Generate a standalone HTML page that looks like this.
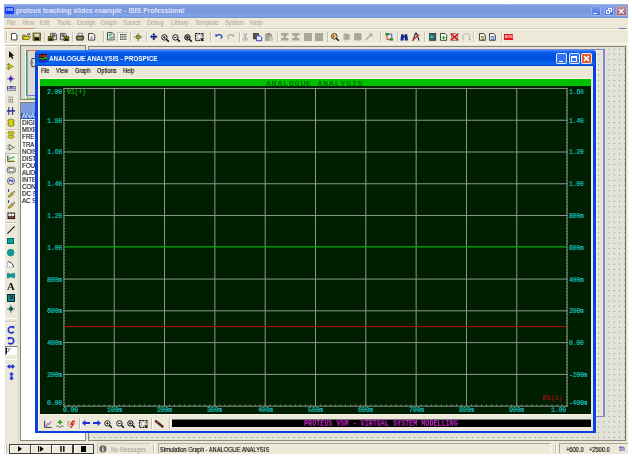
<!DOCTYPE html>
<html><head><meta charset="utf-8"><style>
html,body{margin:0;padding:0;}
body{width:632px;height:460px;overflow:hidden;background:#fff;position:relative;font-family:"Liberation Sans",sans-serif;}
div{position:absolute;}
</style></head><body>
<div style="left:4.00px;top:4.00px;width:624.00px;height:449.50px;background:#ECE9D8"></div>
<div style="left:4.00px;top:4.00px;width:624.00px;height:14.00px;background:linear-gradient(#A9BDEB 0%,#7F9BE1 12%,#7A96DF 55%,#80A5E6 85%,#7090D8 100%)"></div>
<div style="left:4.90px;top:6.80px;width:9.00px;height:7.20px;background:#1a3df0;border-radius:1px"></div>
<div style="left:5.70px;top:8.20px;font-family:'Liberation Sans', sans-serif;font-size:4.4px;line-height:4.4px;white-space:nowrap;color:#D8E0FF;font-weight:bold;transform:scale(0.8660,1.0000);transform-origin:0 0;will-change:transform;">ISIS</div>
<div style="left:15.80px;top:7.36px;font-family:'Liberation Sans', sans-serif;font-size:7.8px;line-height:7.8px;white-space:nowrap;color:#E4EBFF;font-weight:bold;transform:scale(0.8815,1.0000);transform-origin:0 0;will-change:transform;">proteus teaching slides example - ISIS Professional</div>
<div style="left:590.60px;top:5.60px;width:10.60px;height:10.60px;background:linear-gradient(#7898EA,#4A70DC);border:1px solid rgba(200,212,250,0.55);box-sizing:border-box;border-radius:2px"></div>
<div style="left:593.25px;top:12.60px;width:3.82px;height:1.59px;background:#F0F4FF"></div>
<div style="left:603.60px;top:5.60px;width:10.60px;height:10.60px;background:linear-gradient(#7898EA,#4A70DC);border:1px solid rgba(200,212,250,0.55);box-sizing:border-box;border-radius:2px"></div>
<div style="left:607.84px;top:8.14px;width:3.82px;height:3.60px;border:0.9px solid #F0F4FF;border-top-width:1.3px;box-sizing:border-box"></div>
<div style="left:606.36px;top:10.05px;width:3.82px;height:3.60px;border:0.9px solid #F0F4FF;border-top-width:1.3px;box-sizing:border-box;background:#5E80E2"></div>
<div style="left:616.00px;top:5.60px;width:10.60px;height:10.60px;background:linear-gradient(#C08890,#A86470);border:1px solid rgba(200,212,250,0.55);box-sizing:border-box;border-radius:2px"></div>
<svg style="position:absolute;left:616.00px;top:5.60px;overflow:visible" width="10.6" height="10.6" viewBox="0 0 10.6 10.6"><path d="M2.968 2.968L7.632 7.632M7.632 2.968L2.968 7.632" stroke="#fff" stroke-width="1.3"/></svg>
<div style="left:7.00px;top:20.15px;font-family:'Liberation Sans', sans-serif;font-size:6.6px;line-height:6.6px;white-space:nowrap;color:#A8A497;transform:scale(0.7805,1.0000);transform-origin:0 0;will-change:transform;">File</div>
<div style="left:21.80px;top:20.15px;font-family:'Liberation Sans', sans-serif;font-size:6.6px;line-height:6.6px;white-space:nowrap;color:#A8A497;transform:scale(0.8459,1.0000);transform-origin:0 0;will-change:transform;">View</div>
<div style="left:40.40px;top:20.15px;font-family:'Liberation Sans', sans-serif;font-size:6.6px;line-height:6.6px;white-space:nowrap;color:#A8A497;transform:scale(0.8265,1.0000);transform-origin:0 0;will-change:transform;">Edit</div>
<div style="left:57.00px;top:20.15px;font-family:'Liberation Sans', sans-serif;font-size:6.6px;line-height:6.6px;white-space:nowrap;color:#A8A497;transform:scale(0.9086,1.0000);transform-origin:0 0;will-change:transform;">Tools</div>
<div style="left:76.60px;top:20.15px;font-family:'Liberation Sans', sans-serif;font-size:6.6px;line-height:6.6px;white-space:nowrap;color:#A8A497;transform:scale(0.8956,1.0000);transform-origin:0 0;will-change:transform;">Design</div>
<div style="left:100.50px;top:20.15px;font-family:'Liberation Sans', sans-serif;font-size:6.6px;line-height:6.6px;white-space:nowrap;color:#A8A497;transform:scale(0.8722,1.0000);transform-origin:0 0;will-change:transform;">Graph</div>
<div style="left:123.00px;top:20.15px;font-family:'Liberation Sans', sans-serif;font-size:6.6px;line-height:6.6px;white-space:nowrap;color:#A8A497;transform:scale(0.8607,1.0000);transform-origin:0 0;will-change:transform;">Source</div>
<div style="left:147.00px;top:20.15px;font-family:'Liberation Sans', sans-serif;font-size:6.6px;line-height:6.6px;white-space:nowrap;color:#A8A497;transform:scale(0.8535,1.0000);transform-origin:0 0;will-change:transform;">Debug</div>
<div style="left:170.60px;top:20.15px;font-family:'Liberation Sans', sans-serif;font-size:6.6px;line-height:6.6px;white-space:nowrap;color:#A8A497;transform:scale(0.8625,1.0000);transform-origin:0 0;will-change:transform;">Library</div>
<div style="left:195.00px;top:20.15px;font-family:'Liberation Sans', sans-serif;font-size:6.6px;line-height:6.6px;white-space:nowrap;color:#A8A497;transform:scale(0.8775,1.0000);transform-origin:0 0;will-change:transform;">Template</div>
<div style="left:225.00px;top:20.15px;font-family:'Liberation Sans', sans-serif;font-size:6.6px;line-height:6.6px;white-space:nowrap;color:#A8A497;transform:scale(0.8498,1.0000);transform-origin:0 0;will-change:transform;">System</div>
<div style="left:250.00px;top:20.15px;font-family:'Liberation Sans', sans-serif;font-size:6.6px;line-height:6.6px;white-space:nowrap;color:#A8A497;transform:scale(0.9282,1.0000);transform-origin:0 0;will-change:transform;">Help</div>
<div style="left:4.00px;top:28.20px;width:624.00px;height:1.00px;background:#D8D4C4"></div>
<div style="left:4.00px;top:28.00px;width:31.00px;height:1.20px;background:#E0906A"></div>
<div style="left:4.00px;top:29.20px;width:624.00px;height:1.00px;background:#F8F6EE"></div>
<div style="left:619.00px;top:28.00px;width:6.50px;height:1.10px;background:#5A78B8"></div>
<div style="left:5.60px;top:31.00px;width:1.00px;height:11.40px;background:#C8C5B5"></div>
<div style="left:6.60px;top:31.00px;width:0.70px;height:11.40px;background:#F6F5EE"></div>
<div style="left:44.20px;top:32.00px;width:1.00px;height:10.00px;background:#C8C5B5"></div>
<div style="left:45.20px;top:32.00px;width:0.80px;height:10.00px;background:#F8F7F0"></div>
<div style="left:72.00px;top:32.00px;width:1.00px;height:10.00px;background:#C8C5B5"></div>
<div style="left:73.00px;top:32.00px;width:0.80px;height:10.00px;background:#F8F7F0"></div>
<div style="left:102.60px;top:31.00px;width:1.00px;height:11.40px;background:#C8C5B5"></div>
<div style="left:103.60px;top:31.00px;width:0.70px;height:11.40px;background:#F6F5EE"></div>
<div style="left:130.20px;top:32.00px;width:1.00px;height:10.00px;background:#C8C5B5"></div>
<div style="left:131.20px;top:32.00px;width:0.80px;height:10.00px;background:#F8F7F0"></div>
<div style="left:146.20px;top:32.00px;width:1.00px;height:10.00px;background:#C8C5B5"></div>
<div style="left:147.20px;top:32.00px;width:0.80px;height:10.00px;background:#F8F7F0"></div>
<div style="left:209.80px;top:31.00px;width:1.00px;height:11.40px;background:#C8C5B5"></div>
<div style="left:210.80px;top:31.00px;width:0.70px;height:11.40px;background:#F6F5EE"></div>
<div style="left:238.60px;top:32.00px;width:1.00px;height:10.00px;background:#C8C5B5"></div>
<div style="left:239.60px;top:32.00px;width:0.80px;height:10.00px;background:#F8F7F0"></div>
<div style="left:277.20px;top:32.00px;width:1.00px;height:10.00px;background:#C8C5B5"></div>
<div style="left:278.20px;top:32.00px;width:0.80px;height:10.00px;background:#F8F7F0"></div>
<div style="left:327.00px;top:32.00px;width:1.00px;height:10.00px;background:#C8C5B5"></div>
<div style="left:328.00px;top:32.00px;width:0.80px;height:10.00px;background:#F8F7F0"></div>
<div style="left:380.20px;top:31.00px;width:1.00px;height:11.40px;background:#C8C5B5"></div>
<div style="left:381.20px;top:31.00px;width:0.70px;height:11.40px;background:#F6F5EE"></div>
<div style="left:396.80px;top:32.00px;width:1.00px;height:10.00px;background:#C8C5B5"></div>
<div style="left:397.80px;top:32.00px;width:0.80px;height:10.00px;background:#F8F7F0"></div>
<div style="left:424.20px;top:32.00px;width:1.00px;height:10.00px;background:#C8C5B5"></div>
<div style="left:425.20px;top:32.00px;width:0.80px;height:10.00px;background:#F8F7F0"></div>
<div style="left:473.40px;top:32.00px;width:1.00px;height:10.00px;background:#C8C5B5"></div>
<div style="left:474.40px;top:32.00px;width:0.80px;height:10.00px;background:#F8F7F0"></div>
<div style="left:500.60px;top:32.00px;width:1.00px;height:10.00px;background:#C8C5B5"></div>
<div style="left:501.60px;top:32.00px;width:0.80px;height:10.00px;background:#F8F7F0"></div>
<div style="left:4.00px;top:42.60px;width:624.00px;height:0.90px;background:#FAF9F2"></div>
<svg style="position:absolute;left:11.00px;top:33.00px;overflow:visible" width="6.4" height="7.4" viewBox="0 0 6.4 7.4"><path d="M0.5 0.5H4.48L5.9 1.92V6.9H0.5Z" fill="#fff" stroke="#333" stroke-width="0.9"/></svg>
<svg style="position:absolute;left:21.60px;top:33.40px;overflow:visible" width="9" height="6.8" viewBox="0 0 9 6.8"><path d="M0.5 2H3L4 3H7V6.3H0.5Z" fill="#C8B800" stroke="#555" stroke-width="0.7"/><path d="M1 6.3L2.5 3.6H8.6L7 6.3Z" fill="#EEE030" stroke="#6a6000" stroke-width="0.6"/><path d="M5 1.6Q6.5 0 8 1.4" stroke="#222" stroke-width="0.9" fill="none"/><path d="M7.6 0.6L8.6 1.8L7.2 2.2Z" fill="#222"/></svg>
<svg style="position:absolute;left:33.20px;top:33.00px;overflow:visible" width="7.6" height="7.4" viewBox="0 0 7.6 7.4"><rect x="0" y="0" width="7.6" height="7.4" fill="#8A8410"/><rect x="1.4" y="0.6" width="4.8" height="3" fill="#D8D8E8"/><rect x="1.6" y="4.6" width="4.4" height="2.6" fill="#101010"/><rect x="0" y="0" width="7.6" height="7.4" fill="none" stroke="#3a3a00" stroke-width="0.6"/></svg>
<svg style="position:absolute;left:48.40px;top:32.90px;overflow:visible" width="9" height="7.6" viewBox="0 0 9 7.6"><path d="M2.6 0.4H7.4L8.6 1.6V6.8H2.6Z" fill="#D8D8D8" stroke="#333" stroke-width="0.8"/><path d="M4.2 1.4H7.4V3.6H4.2Z" fill="#555"/><rect x="0.2" y="3.8" width="4.8" height="3.6" fill="#A8A000" stroke="#111" stroke-width="0.7"/><rect x="1.2" y="5.4" width="2.8" height="1.8" fill="#111"/></svg>
<svg style="position:absolute;left:59.50px;top:32.90px;overflow:visible" width="9" height="7.6" viewBox="0 0 9 7.6"><path d="M0.4 0.4H5.2L6.4 1.6V6.8H0.4Z" fill="#D8D8D8" stroke="#333" stroke-width="0.8"/><path d="M1.4 1.4H4.6V3.6H1.4Z" fill="#555"/><rect x="4" y="3.8" width="4.8" height="3.6" fill="#A8A000" stroke="#111" stroke-width="0.7"/><rect x="5" y="5.4" width="2.8" height="1.8" fill="#111"/></svg>
<svg style="position:absolute;left:75.90px;top:33.00px;overflow:visible" width="8" height="7.6" viewBox="0 0 8 7.6"><path d="M2 0.3H6.4V3H2Z" fill="#eee" stroke="#444" stroke-width="0.6"/><path d="M0.4 3H7.6Q8 5 7.2 7.2H0.8Q0 5 0.4 3Z" fill="#606060" stroke="#222" stroke-width="0.6"/><rect x="2.2" y="4.6" width="3.6" height="1.1" fill="#D8C800"/></svg>
<svg style="position:absolute;left:87.80px;top:33.00px;overflow:visible" width="7.2" height="7.6" viewBox="0 0 7.2 7.6"><path d="M0.5 0.5H5.04L6.7 2.16V7.1H0.5Z" fill="#F4F4F4" stroke="#333" stroke-width="0.9"/><rect x="2.5" y="3.5" width="2" height="2.5" fill="#999"/></svg>
<svg style="position:absolute;left:107.30px;top:32.40px;overflow:visible" width="7.6" height="8.4" viewBox="0 0 7.6 8.4"><path d="M0.5 0.5H5.32L7.1 2.28V7.9H0.5Z" fill="#F0F0F0" stroke="#444" stroke-width="0.9"/><path d="M2 4A2 2 0 0 1 5.5 3" stroke="#20A040" stroke-width="1.1" fill="none"/><path d="M5.6 4.6A2 2 0 0 1 2.2 5.6" stroke="#20A040" stroke-width="1.1" fill="none"/><circle cx="3.8" cy="4.3" r="0.6" fill="#3090D0"/></svg>
<div style="left:117.00px;top:31.50px;width:11.20px;height:10.80px;background:#F6F5EE;border-top:1px solid #C8C6B8;border-left:1px solid #C8C6B8;box-sizing:border-box"></div>
<svg style="position:absolute;left:119.70px;top:34.30px;overflow:visible" width="6.4" height="6" viewBox="0 0 6.4 6"><rect x="0.00" y="0.00" width="1.2" height="1.2" fill="#222"/><rect x="0.00" y="2.30" width="1.2" height="1.2" fill="#222"/><rect x="0.00" y="4.60" width="1.2" height="1.2" fill="#222"/><rect x="1.75" y="0.00" width="1.2" height="1.2" fill="#222"/><rect x="1.75" y="2.30" width="1.2" height="1.2" fill="#222"/><rect x="1.75" y="4.60" width="1.2" height="1.2" fill="#222"/><rect x="3.50" y="0.00" width="1.2" height="1.2" fill="#222"/><rect x="3.50" y="2.30" width="1.2" height="1.2" fill="#222"/><rect x="3.50" y="4.60" width="1.2" height="1.2" fill="#222"/><rect x="5.25" y="0.00" width="1.2" height="1.2" fill="#222"/><rect x="5.25" y="2.30" width="1.2" height="1.2" fill="#222"/><rect x="5.25" y="4.60" width="1.2" height="1.2" fill="#222"/></svg>
<svg style="position:absolute;left:134.30px;top:32.80px;overflow:visible" width="8.4" height="8" viewBox="0 0 8.4 8"><path d="M4.2 0V8M0 4H8.4" stroke="#555" stroke-width="0.8"/><rect x="2.4" y="2.2" width="3.6" height="3.6" fill="#A09A20" stroke="#505000" stroke-width="0.4"/></svg>
<svg style="position:absolute;left:150.00px;top:33.40px;overflow:visible" width="7.6" height="7.4" viewBox="0 0 7.6 7.4"><path d="M3.8 0L5.4 2H4.5V3H5.6V2.1L7.6 3.7L5.6 5.3V4.4H4.5V5.4H5.4L3.8 7.4L2.2 5.4H3.1V4.4H2V5.3L0 3.7L2 2.1V3H3.1V2H2.2Z" fill="#10208A"/></svg>
<svg style="position:absolute;left:161.00px;top:33.50px;overflow:visible" width="8" height="7.8" viewBox="0 0 8 7.8"><circle cx="3.4" cy="3.4" r="2.7" fill="#fff" stroke="#111" stroke-width="1"/><path d="M5.3 5.3L7.8 7.6" stroke="#111" stroke-width="1.5"/><path d="M2 3.4H4.8M3.4 2V4.8" stroke="#111" stroke-width="0.8"/></svg>
<svg style="position:absolute;left:172.30px;top:33.50px;overflow:visible" width="8" height="7.8" viewBox="0 0 8 7.8"><circle cx="3.4" cy="3.4" r="2.7" fill="#fff" stroke="#111" stroke-width="1"/><path d="M5.3 5.3L7.8 7.6" stroke="#111" stroke-width="1.5"/><path d="M2 3.4H4.8" stroke="#111" stroke-width="0.9"/></svg>
<svg style="position:absolute;left:183.50px;top:33.50px;overflow:visible" width="8" height="7.8" viewBox="0 0 8 7.8"><circle cx="3.4" cy="3.4" r="2.7" fill="#999" stroke="#111" stroke-width="1"/><path d="M5.3 5.3L7.8 7.6" stroke="#111" stroke-width="1.5"/><path d="M2 3.4H4.8M3.4 2V4.8" stroke="#111" stroke-width="0.8"/></svg>
<svg style="position:absolute;left:195.00px;top:33.00px;overflow:visible" width="8.6" height="8" viewBox="0 0 8.6 8"><rect x="0.6" y="0.6" width="7.4" height="6.8" fill="#fff" stroke="#181818" stroke-width="1.3" stroke-dasharray="2 0.8"/><circle cx="4.3" cy="3.8" r="2.2" fill="#fff" stroke="#555" stroke-width="0.5"/><path d="M5.8 5.6L8.2 7.8" stroke="#111" stroke-width="1.3"/></svg>
<svg style="position:absolute;left:215.40px;top:34.00px;overflow:visible" width="7.8" height="4.8" viewBox="0 0 7.8 4.8"><path d="M1.6 1.6Q4 -0.4 6.6 1.6Q7.6 3.6 5.6 4.4" stroke="#2040D0" stroke-width="1.3" fill="none"/><path d="M0 0.4L2.8 0.8L1 3.4Z" fill="#2040D0"/></svg>
<svg style="position:absolute;left:227.00px;top:34.00px;overflow:visible" width="7.2" height="4.8" viewBox="0 0 7.2 4.8"><path d="M6 1.6Q3.6 -0.4 1 1.6Q0 3.6 2 4.4" stroke="#A8A698" stroke-width="1.1" fill="none"/><path d="M7.2 0.4L4.6 0.8L6.4 3.4Z" fill="#A8A698"/></svg>
<svg style="position:absolute;left:243.00px;top:33.00px;overflow:visible" width="4.6" height="7.7" viewBox="0 0 4.6 7.7"><path d="M0.8 0L3 5M3.8 0L1.6 5" stroke="#999" stroke-width="0.8"/><circle cx="1.1" cy="6.3" r="1.1" fill="none" stroke="#999" stroke-width="0.7"/><circle cx="3.5" cy="6.3" r="1.1" fill="none" stroke="#999" stroke-width="0.7"/></svg>
<svg style="position:absolute;left:253.00px;top:33.00px;overflow:visible" width="9" height="8" viewBox="0 0 9 8"><rect x="0.3" y="0.3" width="5" height="5.6" fill="#555" stroke="#222" stroke-width="0.6"/><path d="M3.3 2.8H7L8.6 4.4V7.7H3.3Z" fill="#E8E8F8" stroke="#2030C0" stroke-width="0.9"/></svg>
<svg style="position:absolute;left:265.20px;top:33.00px;overflow:visible" width="8.4" height="8" viewBox="0 0 8.4 8"><rect x="0.5" y="1" width="6" height="6.5" fill="#A8A698" stroke="#9a988a" stroke-width="0.6"/><rect x="2" y="0" width="3" height="1.6" fill="#8A887A"/><rect x="4" y="4" width="4.2" height="3.8" fill="#C8C6BA"/></svg>
<svg style="position:absolute;left:281.20px;top:33.10px;overflow:visible" width="7.4" height="7.6" viewBox="0 0 7.4 7.6"><path d="M0 0H7.4V2.6H5V5H7.4V7.6H0V5H2.4V2.6H0Z" fill="#A9A799"/></svg>
<svg style="position:absolute;left:292.40px;top:33.10px;overflow:visible" width="7.4" height="7.6" viewBox="0 0 7.4 7.6"><path d="M0 0H7.4V2.6H5V5H7.4V7.6H0V5H2.4V2.6H0Z" fill="#A9A799"/></svg>
<div style="left:304.00px;top:33.10px;width:7.60px;height:7.60px;background:#A9A799"></div>
<div style="left:315.40px;top:33.10px;width:7.40px;height:7.60px;background:#A9A799"></div>
<svg style="position:absolute;left:331.00px;top:33.00px;overflow:visible" width="8" height="8" viewBox="0 0 8 8"><circle cx="3.3" cy="3.3" r="2.8" fill="#E8D070" stroke="#333" stroke-width="0.9"/><path d="M1.8 2.2L4.5 3.3L1.8 4.5Z" fill="#D03020"/><path d="M5.2 5.2L7.8 7.8" stroke="#111" stroke-width="1.5"/></svg>
<svg style="position:absolute;left:343.30px;top:33.00px;overflow:visible" width="7.4" height="7.6" viewBox="0 0 7.4 7.6"><rect x="1.4" y="1.2" width="4.6" height="5.2" fill="#A9A799"/><path d="M0 2H7.4M0 4H7.4M0 6H7.4M2 0V7.6M4 0V7.6" stroke="#A9A799" stroke-width="0.8"/></svg>
<svg style="position:absolute;left:353.90px;top:33.10px;overflow:visible" width="7.6" height="7.6" viewBox="0 0 7.6 7.6"><rect x="0" y="0" width="7.6" height="7.6" rx="1.5" fill="#A9A799"/></svg>
<svg style="position:absolute;left:365.00px;top:33.10px;overflow:visible" width="7.6" height="7.6" viewBox="0 0 7.6 7.6"><path d="M0.5 7.2L5.5 2.2" stroke="#A9A799" stroke-width="1.3"/><path d="M3.5 0.5L7.4 0.5L7.4 4.4Z" fill="#A9A799"/></svg>
<svg style="position:absolute;left:385.00px;top:33.20px;overflow:visible" width="8.2" height="7.6" viewBox="0 0 8.2 7.6"><rect x="0.5" y="0" width="3.2" height="2.4" fill="#109020"/><rect x="4.6" y="5.2" width="3.4" height="2.4" fill="#109020"/><path d="M2 2.4V6.6H4.6" stroke="#E03030" stroke-width="1" fill="none"/><path d="M3.7 1.2H6.8V5.2" stroke="#3050D0" stroke-width="1" fill="none"/></svg>
<svg style="position:absolute;left:400.40px;top:33.00px;overflow:visible" width="8.4" height="7.8" viewBox="0 0 8.4 7.8"><path d="M0.4 7.6L1.2 1.2H3.6V7.6Z M4.8 7.6V1.2H7.2L8 7.6Z" fill="#14248A"/><rect x="3" y="2.6" width="2.4" height="2" fill="#14248A"/></svg>
<svg style="position:absolute;left:412.20px;top:33.00px;overflow:visible" width="7.8" height="7.8" viewBox="0 0 7.8 7.8"><path d="M1 7.6L3.5 0.4H4.5L7 7.6" stroke="#222" stroke-width="1.2" fill="none"/><path d="M0.4 7.6L7.4 1.4" stroke="#D02020" stroke-width="1.1"/></svg>
<svg style="position:absolute;left:428.80px;top:33.00px;overflow:visible" width="7.2" height="7.8" viewBox="0 0 7.2 7.8"><rect x="0.4" y="0.4" width="6.4" height="7" fill="#2A6A5A" stroke="#333" stroke-width="0.7"/><path d="M1.6 2.2L5.4 3.9L1.6 5.6Z" fill="#40D0E0"/></svg>
<svg style="position:absolute;left:440.40px;top:33.00px;overflow:visible" width="7.2" height="7.8" viewBox="0 0 7.2 7.8"><path d="M0.5 0.5H5.04L6.7 2.16V7.3H0.5Z" fill="#fff" stroke="#333" stroke-width="0.9"/><path d="M3.6 2.6V6.6M1.6 4.6H5.6" stroke="#20C020" stroke-width="1.3"/></svg>
<svg style="position:absolute;left:450.40px;top:33.00px;overflow:visible" width="9" height="7.8" viewBox="0 0 9 7.8"><path d="M1.7 0.5H5.82L7.3 1.9799999999999998V7.3H1.7Z" fill="#D8D8D8" stroke="#777" stroke-width="0.9"/><path d="M0.6 0.6L8.4 7.4M8.4 0.6L0.6 7.4" stroke="#E01818" stroke-width="1.4"/></svg>
<svg style="position:absolute;left:461.60px;top:33.00px;overflow:visible" width="8.6" height="7.8" viewBox="0 0 8.6 7.8"><path d="M1 7.4V3Q1 0.8 3.4 0.8H5.4Q7.6 0.8 7.6 3V7.4" stroke="#B5B3A6" stroke-width="1" fill="none"/><path d="M6 5.6L7.6 7.6L8.6 5.6" stroke="#B5B3A6" stroke-width="0.8" fill="none"/></svg>
<svg style="position:absolute;left:478.50px;top:33.00px;overflow:visible" width="6.8" height="7.8" viewBox="0 0 6.8 7.8"><path d="M0.5 0.5H4.76L6.3 2.04V7.3H0.5Z" fill="#F4F4F4" stroke="#333" stroke-width="0.9"/><text x="1.4" y="6.6" font-size="6" font-family="Liberation Sans" font-weight="bold" fill="#707010">S</text></svg>
<svg style="position:absolute;left:489.00px;top:33.00px;overflow:visible" width="6.8" height="7.8" viewBox="0 0 6.8 7.8"><path d="M0.5 0.5H4.76L6.3 2.04V7.3H0.5Z" fill="#F4F4F4" stroke="#333" stroke-width="0.9"/><text x="1.4" y="6.6" font-size="6" font-family="Liberation Sans" font-weight="bold" fill="#2060D0">S</text></svg>
<div style="left:504.00px;top:33.50px;width:9.40px;height:6.80px;background:#E81818"></div>
<div style="left:505.00px;top:34.93px;font-family:'Liberation Sans', sans-serif;font-size:4.2px;line-height:4.2px;white-space:nowrap;color:#FFD8D8;font-weight:bold;transform:scale(0.7552,1.0000);transform-origin:0 0;will-change:transform;">BOM</div>
<div style="left:4.20px;top:44.00px;width:0.80px;height:399.00px;background:#FFFFFF"></div>
<div style="left:5.20px;top:45.40px;width:12.00px;height:0.90px;background:#C5C2B2"></div>
<div style="left:5.20px;top:46.30px;width:12.00px;height:0.70px;background:#fff"></div>
<svg style="position:absolute;left:7.80px;top:51.20px;overflow:visible" width="7" height="8" viewBox="0 0 7 8"><path d="M1 0V7L2.8 5.4L4.2 8L5.4 7.4L4.1 4.8H6.4Z" fill="#111"/></svg>
<svg style="position:absolute;left:6.40px;top:62.60px;overflow:visible" width="8" height="7.2" viewBox="0 0 8 7.2"><path d="M0 2H2.5M0 5.2H2.5M5.5 3.6H7.8" stroke="#888" stroke-width="0.8"/><path d="M2.2 0.3L6.4 3.6L2.2 6.9Z" fill="#D8C800" stroke="#606000" stroke-width="0.7"/></svg>
<svg style="position:absolute;left:7.00px;top:74.60px;overflow:visible" width="7.6" height="7.6" viewBox="0 0 7.6 7.6"><path d="M3.8 0V7.6M0 3.8H7.6" stroke="#303080" stroke-width="0.7"/><circle cx="3.8" cy="3.8" r="2" fill="#6020C0"/></svg>
<div style="left:6.80px;top:85.80px;width:9.60px;height:5.60px;background:#D8D8E0;border:0.7px solid #8888A0;box-sizing:border-box"></div>
<div style="left:7.40px;top:86.73px;font-family:'Liberation Sans', sans-serif;font-size:3.6px;line-height:3.6px;white-space:nowrap;color:#2A2A90;font-weight:bold;transform:scale(1.1718,1.0000);transform-origin:0 0;will-change:transform;">LBL</div>
<svg style="position:absolute;left:8.20px;top:96.20px;overflow:visible" width="6" height="7" viewBox="0 0 6 7"><path d="M0.4 1.2Q1 0 1.6 1.2T2.8 1.2T4 1.2T5.4 1.2" stroke="#555" stroke-width="0.7" fill="none"/><path d="M0.4 3.4H5.4M0.4 5H5.4" stroke="#666" stroke-width="0.9" stroke-dasharray="1.2 0.5"/><path d="M0.4 6.2H5.4" stroke="#888" stroke-width="0.7"/></svg>
<svg style="position:absolute;left:6.80px;top:107.00px;overflow:visible" width="8" height="8" viewBox="0 0 8 8"><path d="M0 3.9H8" stroke="#10188A" stroke-width="1.4"/><path d="M1.8 0V3.6M5.6 0V3.6M1.8 4.4V8M5.6 4.4V8" stroke="#10188A" stroke-width="0.9"/></svg>
<svg style="position:absolute;left:6.60px;top:118.60px;overflow:visible" width="8" height="7.4" viewBox="0 0 8 7.4"><rect x="1.4" y="0.3" width="5.2" height="7" rx="1" fill="#D8CC10" stroke="#707000" stroke-width="0.7"/><path d="M0 2H1.4M0 5.2H1.4M6.6 2H8M6.6 5.2H8" stroke="#707070" stroke-width="0.7"/></svg>
<div style="left:5.20px;top:129.30px;width:12.00px;height:0.80px;background:#C5C2B2"></div>
<div style="left:5.20px;top:130.10px;width:12.00px;height:0.60px;background:#fff"></div>
<svg style="position:absolute;left:7.00px;top:131.40px;overflow:visible" width="8" height="7.4" viewBox="0 0 8 7.4"><rect x="1" y="0.3" width="6" height="2.8" rx="1.3" fill="#D8CC10" stroke="#606000" stroke-width="0.6"/><rect x="1" y="4.2" width="6" height="2.8" rx="1.3" fill="#D8CC10" stroke="#606000" stroke-width="0.6"/></svg>
<svg style="position:absolute;left:6.60px;top:143.60px;overflow:visible" width="8" height="6.8" viewBox="0 0 8 6.8"><path d="M0 2H1.6M0 4.6H1.6" stroke="#40B040" stroke-width="0.8"/><path d="M2.2 0.4L6.6 3.3L2.2 6.2Z" fill="#F0F0E0" stroke="#333" stroke-width="0.7"/><path d="M6.6 3.3H8" stroke="#40B040" stroke-width="0.8"/></svg>
<div style="left:5.20px;top:153.20px;width:12.00px;height:10.20px;background:#F6F5EE;border-top:1px solid #B8B6A8;border-left:1px solid #B8B6A8;box-sizing:border-box"></div>
<svg style="position:absolute;left:7.00px;top:154.60px;overflow:visible" width="8" height="7.2" viewBox="0 0 8 7.2"><rect x="0.3" y="0.3" width="7.4" height="6.8" fill="#F4F2E4"/><path d="M0.8 0.4V6.6H7.6" stroke="#222" stroke-width="0.9" fill="none"/><path d="M1.4 5L3 2.6L4.4 4L6 1.6L7.4 2.8" stroke="#10A010" stroke-width="0.9" fill="none"/><rect x="1.2" y="5.4" width="6.2" height="0.9" fill="#C8B820"/></svg>
<svg style="position:absolute;left:6.60px;top:167.00px;overflow:visible" width="8.6" height="6.2" viewBox="0 0 8.6 6.2"><rect x="0.3" y="0.3" width="8" height="5.6" rx="1.8" fill="#E8E6DA" stroke="#555" stroke-width="0.8"/><rect x="2" y="1.6" width="4.6" height="3" fill="#fff" stroke="#555" stroke-width="0.6"/></svg>
<svg style="position:absolute;left:7.00px;top:177.20px;overflow:visible" width="8" height="8" viewBox="0 0 8 8"><circle cx="4" cy="4" r="3.5" fill="#F0F0F0" stroke="#444" stroke-width="0.8"/><path d="M2 5Q2.6 1.6 4 3.6Q5.4 6 6 2.6" stroke="#2040D0" stroke-width="1.1" fill="none"/></svg>
<svg style="position:absolute;left:6.60px;top:188.60px;overflow:visible" width="8.4" height="8.4" viewBox="0 0 8.4 8.4"><path d="M1 7.6L5 3.4L6.6 5L2.6 8.2Z" fill="#D8C810" stroke="#333" stroke-width="0.6"/><path d="M5.6 3.8Q6.6 1.6 8.2 3" stroke="#333" stroke-width="0.8" fill="none"/><path d="M1.6 0V3" stroke="#2A3AC0" stroke-width="1"/></svg>
<svg style="position:absolute;left:6.60px;top:200.20px;overflow:visible" width="8.4" height="8.4" viewBox="0 0 8.4 8.4"><path d="M1 7.6L5 3.4L6.6 5L2.6 8.2Z" fill="#D8C810" stroke="#333" stroke-width="0.6"/><path d="M5.6 3.8Q6.6 1.6 8.2 3" stroke="#333" stroke-width="0.8" fill="none"/><path d="M1.6 0V3" stroke="#2A3AC0" stroke-width="1"/></svg>
<svg style="position:absolute;left:6.60px;top:212.40px;overflow:visible" width="8.6" height="7.6" viewBox="0 0 8.6 7.6"><rect x="0.5" y="0.5" width="7.6" height="6.6" fill="#222"/><circle cx="2.8" cy="2.8" r="1.6" fill="#eee"/><circle cx="5.8" cy="2.8" r="1.6" fill="#eee"/><rect x="2" y="4.8" width="4.6" height="1.2" fill="#D03030"/></svg>
<div style="left:5.20px;top:222.20px;width:12.00px;height:0.80px;background:#C5C2B2"></div>
<div style="left:5.20px;top:223.00px;width:12.00px;height:0.60px;background:#fff"></div>
<svg style="position:absolute;left:6.60px;top:225.70px;overflow:visible" width="8" height="8" viewBox="0 0 8 8"><path d="M0.4 7.6L7.6 0.4" stroke="#111" stroke-width="1.1"/></svg>
<div style="left:7.20px;top:238.00px;width:7.20px;height:6.40px;background:#109C9C;border:0.6px solid #066;box-sizing:border-box"></div>
<svg style="position:absolute;left:7.00px;top:248.60px;overflow:visible" width="7.4" height="7.4" viewBox="0 0 7.4 7.4"><circle cx="3.7" cy="3.7" r="3.4" fill="#109C9C" stroke="#066" stroke-width="0.5"/></svg>
<svg style="position:absolute;left:7.00px;top:260.80px;overflow:visible" width="7.4" height="6.8" viewBox="0 0 7.4 6.8"><path d="M0.5 0.5V6H6.6Q6 2 1.2 0.5Z" fill="#fff" stroke="#5050D0" stroke-width="0.6" stroke-dasharray="1 0.7"/><path d="M1.2 0.5Q6 2 6.6 6" stroke="#222" stroke-width="0.8" fill="none"/></svg>
<svg style="position:absolute;left:6.80px;top:271.60px;overflow:visible" width="8" height="7.2" viewBox="0 0 8 7.2"><path d="M0.6 1Q3.8 3.2 7.4 1Q8.4 3.6 7.4 6.2Q3.8 4 0.6 6.2Q-0.4 3.6 0.6 1Z" fill="#109C9C" stroke="#066" stroke-width="0.5"/></svg>
<div style="left:6.60px;top:281.57px;font-family:'Liberation Serif', serif;font-size:10px;line-height:10px;white-space:nowrap;color:#111;font-weight:bold;transform:scale(1.0801,1.0000);transform-origin:0 0;will-change:transform;">A</div>
<div style="left:7.00px;top:294.00px;width:7.60px;height:7.60px;background:#188C8C;border:0.6px solid #033;box-sizing:border-box"></div>
<div style="left:8.50px;top:294.32px;font-family:'Liberation Sans', sans-serif;font-size:6.8px;line-height:6.8px;white-space:nowrap;color:#0A2020;font-weight:bold;transform:scale(1.0142,1.0000);transform-origin:0 0;will-change:transform;">S</div>
<svg style="position:absolute;left:7.00px;top:305.40px;overflow:visible" width="7.8" height="7.8" viewBox="0 0 7.8 7.8"><path d="M3.9 0V7.8M0 3.9H7.8" stroke="#333" stroke-width="0.7"/><circle cx="3.9" cy="3.9" r="2.1" fill="#106060"/></svg>
<div style="left:5.20px;top:317.60px;width:12.00px;height:0.80px;background:#C5C2B2"></div>
<div style="left:5.20px;top:318.40px;width:12.00px;height:0.60px;background:#fff"></div>
<div style="left:5.20px;top:320.80px;width:12.00px;height:0.80px;background:#C5C2B2"></div>
<div style="left:5.20px;top:321.60px;width:12.00px;height:0.60px;background:#fff"></div>
<svg style="position:absolute;left:7.00px;top:325.60px;overflow:visible" width="8" height="8" viewBox="0 0 8 8"><path d="M6.6 1.6A3.1 3.1 0 1 0 6.8 5.8" stroke="#1A30E0" stroke-width="1.6" fill="none"/><path d="M4.4 0L7.6 0.2L6.8 3Z" fill="#1A30E0"/></svg>
<svg style="position:absolute;left:7.00px;top:337.20px;overflow:visible" width="8" height="8" viewBox="0 0 8 8"><path d="M1.4 1.6A3.1 3.1 0 1 1 1.2 5.8" stroke="#1A30E0" stroke-width="1.6" fill="none"/><path d="M3.6 0L0.4 0.2L1.2 3Z" fill="#1A30E0"/></svg>
<div style="left:5.20px;top:346.40px;width:13.00px;height:8.80px;background:#fff;border-top:1px solid #777;border-left:1px solid #777;border-right:0.5px solid #ddd;box-sizing:border-box"></div>
<div style="left:6.40px;top:347.71px;font-family:'Liberation Sans', sans-serif;font-size:5.6px;line-height:5.6px;white-space:nowrap;color:#333;will-change:transform;">0°</div>
<div style="left:6.40px;top:348.00px;width:0.70px;height:6.00px;background:#111"></div>
<div style="left:5.20px;top:358.60px;width:12.00px;height:0.80px;background:#C5C2B2"></div>
<div style="left:5.20px;top:359.40px;width:12.00px;height:0.60px;background:#fff"></div>
<svg style="position:absolute;left:6.80px;top:363.80px;overflow:visible" width="8" height="5" viewBox="0 0 8 5"><path d="M0 2.5L2.6 0V1.6H5V0L8 2.5L5 5V3.4H2.6V5Z" fill="#1A30E0"/></svg>
<svg style="position:absolute;left:8.60px;top:372.40px;overflow:visible" width="5" height="8.6" viewBox="0 0 5 8.6"><path d="M2.5 0L5 2.6H3.4V5.8H5L2.5 8.6L0 5.8H1.6V2.6H0Z" fill="#1A30E0"/></svg>
<div style="left:18.20px;top:44.00px;width:0.90px;height:399.00px;background:#D6D3C4"></div>
<div style="left:20.00px;top:45.40px;width:66.00px;height:54.80px;background:#DCDBCE;border-top:1.6px solid #858375;border-left:1.4px solid #858375;border-bottom:1.6px solid #858375;border-right:1.2px solid #858375;box-sizing:border-box"></div>
<div style="left:24.60px;top:48.80px;width:0.80px;height:49.00px;background:#FFFDE8"></div>
<div style="left:26.00px;top:49.60px;width:60.00px;height:0.90px;background:#E07060"></div>
<div style="left:25.90px;top:49.60px;width:0.90px;height:46.60px;background:#7070D8"></div>
<div style="left:25.90px;top:95.40px;width:60.00px;height:0.90px;background:#7070D8"></div>
<div style="left:27.00px;top:50.50px;width:0.90px;height:48.00px;background:#60D060"></div>
<div style="left:27.00px;top:97.80px;width:60.00px;height:0.90px;background:#60D060"></div>
<svg style="position:absolute;left:30.20px;top:57.60px;overflow:visible" width="6" height="9.4" viewBox="0 0 6 9.4"><path d="M6 0.5H1.8V8.6H6" stroke="#222" stroke-width="0.8" fill="none"/><circle cx="1.5" cy="4.6" r="0.9" fill="#E8E6DA" stroke="#222" stroke-width="0.6"/></svg>
<div style="left:20.00px;top:102.20px;width:66.00px;height:339.00px;background:#fff;border-top:1.2px solid #858375;border-left:1.4px solid #858375;border-right:1px solid #8A887A;border-bottom:1.2px solid #8A887A;box-sizing:border-box"></div>
<div style="left:21.40px;top:103.20px;width:64.00px;height:9.40px;background:#7E9BE0"></div>
<div style="left:21.40px;top:112.60px;width:64.00px;height:6.30px;background:#2E5EC8"></div>
<div style="left:21.80px;top:112.26px;font-family:'Liberation Sans', sans-serif;font-size:7.2px;line-height:7.2px;white-space:nowrap;color:#fff;transform:scale(0.8600,1.0000);transform-origin:0 0;will-change:transform;-webkit-text-stroke:0.12px currentColor;">ANALOGUE</div>
<div style="left:21.80px;top:119.33px;font-family:'Liberation Sans', sans-serif;font-size:7.2px;line-height:7.2px;white-space:nowrap;color:#000;transform:scale(0.8600,1.0000);transform-origin:0 0;will-change:transform;-webkit-text-stroke:0.12px currentColor;">DIGITAL</div>
<div style="left:21.80px;top:126.40px;font-family:'Liberation Sans', sans-serif;font-size:7.2px;line-height:7.2px;white-space:nowrap;color:#000;transform:scale(0.8600,1.0000);transform-origin:0 0;will-change:transform;-webkit-text-stroke:0.12px currentColor;">MIXED</div>
<div style="left:21.80px;top:133.47px;font-family:'Liberation Sans', sans-serif;font-size:7.2px;line-height:7.2px;white-space:nowrap;color:#000;transform:scale(0.8600,1.0000);transform-origin:0 0;will-change:transform;-webkit-text-stroke:0.12px currentColor;">FREQUENCY</div>
<div style="left:21.80px;top:140.54px;font-family:'Liberation Sans', sans-serif;font-size:7.2px;line-height:7.2px;white-space:nowrap;color:#000;transform:scale(0.8600,1.0000);transform-origin:0 0;will-change:transform;-webkit-text-stroke:0.12px currentColor;">TRANSFER</div>
<div style="left:21.80px;top:147.61px;font-family:'Liberation Sans', sans-serif;font-size:7.2px;line-height:7.2px;white-space:nowrap;color:#000;transform:scale(0.8600,1.0000);transform-origin:0 0;will-change:transform;-webkit-text-stroke:0.12px currentColor;">NOISE</div>
<div style="left:21.80px;top:154.68px;font-family:'Liberation Sans', sans-serif;font-size:7.2px;line-height:7.2px;white-space:nowrap;color:#000;transform:scale(0.8600,1.0000);transform-origin:0 0;will-change:transform;-webkit-text-stroke:0.12px currentColor;">DISTORTION</div>
<div style="left:21.80px;top:161.75px;font-family:'Liberation Sans', sans-serif;font-size:7.2px;line-height:7.2px;white-space:nowrap;color:#000;transform:scale(0.8600,1.0000);transform-origin:0 0;will-change:transform;-webkit-text-stroke:0.12px currentColor;">FOURIER</div>
<div style="left:21.80px;top:168.82px;font-family:'Liberation Sans', sans-serif;font-size:7.2px;line-height:7.2px;white-space:nowrap;color:#000;transform:scale(0.8600,1.0000);transform-origin:0 0;will-change:transform;-webkit-text-stroke:0.12px currentColor;">AUDIO</div>
<div style="left:21.80px;top:175.89px;font-family:'Liberation Sans', sans-serif;font-size:7.2px;line-height:7.2px;white-space:nowrap;color:#000;transform:scale(0.8600,1.0000);transform-origin:0 0;will-change:transform;-webkit-text-stroke:0.12px currentColor;">INTERACTIVE</div>
<div style="left:21.80px;top:182.96px;font-family:'Liberation Sans', sans-serif;font-size:7.2px;line-height:7.2px;white-space:nowrap;color:#000;transform:scale(0.8600,1.0000);transform-origin:0 0;will-change:transform;-webkit-text-stroke:0.12px currentColor;">CONFORMANCE</div>
<div style="left:21.80px;top:190.03px;font-family:'Liberation Sans', sans-serif;font-size:7.2px;line-height:7.2px;white-space:nowrap;color:#000;transform:scale(0.8600,1.0000);transform-origin:0 0;will-change:transform;-webkit-text-stroke:0.12px currentColor;">DC SWEEP</div>
<div style="left:21.80px;top:197.10px;font-family:'Liberation Sans', sans-serif;font-size:7.2px;line-height:7.2px;white-space:nowrap;color:#000;transform:scale(0.8600,1.0000);transform-origin:0 0;will-change:transform;-webkit-text-stroke:0.12px currentColor;">AC SWEEP</div>
<div style="left:87.80px;top:45.60px;width:538.60px;height:395.40px;background:#E3E2D6;border-top:1.6px solid #84826F;border-left:1.2px solid #84826F;border-bottom:1.2px solid #8C8A7C;border-right:1.2px solid #707064;box-sizing:border-box"></div>
<div style="left:596.00px;top:50.00px;width:7.00px;height:366.00px;background:linear-gradient(90deg,#F4F2DE 0,#E8E7DA 30%,#E6E5D8 80%,#F0EEDA 100%)"></div>
<svg style="position:absolute;left:0;top:0" width="632" height="460" fill="#8E8D84"><rect x="598.00" y="48.55" width="1" height="1"/><rect x="603.25" y="48.55" width="1" height="1"/><rect x="608.50" y="48.55" width="1" height="1"/><rect x="613.75" y="48.55" width="1" height="1"/><rect x="619.00" y="48.55" width="1" height="1"/><rect x="624.25" y="48.55" width="1" height="1"/><rect x="598.00" y="53.80" width="1" height="1"/><rect x="603.25" y="53.80" width="1" height="1"/><rect x="608.50" y="53.80" width="1" height="1"/><rect x="613.75" y="53.80" width="1" height="1"/><rect x="619.00" y="53.80" width="1" height="1"/><rect x="624.25" y="53.80" width="1" height="1"/><rect x="598.00" y="59.05" width="1" height="1"/><rect x="603.25" y="59.05" width="1" height="1"/><rect x="608.50" y="59.05" width="1" height="1"/><rect x="613.75" y="59.05" width="1" height="1"/><rect x="619.00" y="59.05" width="1" height="1"/><rect x="624.25" y="59.05" width="1" height="1"/><rect x="598.00" y="64.30" width="1" height="1"/><rect x="603.25" y="64.30" width="1" height="1"/><rect x="608.50" y="64.30" width="1" height="1"/><rect x="613.75" y="64.30" width="1" height="1"/><rect x="619.00" y="64.30" width="1" height="1"/><rect x="624.25" y="64.30" width="1" height="1"/><rect x="598.00" y="69.55" width="1" height="1"/><rect x="603.25" y="69.55" width="1" height="1"/><rect x="608.50" y="69.55" width="1" height="1"/><rect x="613.75" y="69.55" width="1" height="1"/><rect x="619.00" y="69.55" width="1" height="1"/><rect x="624.25" y="69.55" width="1" height="1"/><rect x="598.00" y="74.80" width="1" height="1"/><rect x="603.25" y="74.80" width="1" height="1"/><rect x="608.50" y="74.80" width="1" height="1"/><rect x="613.75" y="74.80" width="1" height="1"/><rect x="619.00" y="74.80" width="1" height="1"/><rect x="624.25" y="74.80" width="1" height="1"/><rect x="598.00" y="80.05" width="1" height="1"/><rect x="603.25" y="80.05" width="1" height="1"/><rect x="608.50" y="80.05" width="1" height="1"/><rect x="613.75" y="80.05" width="1" height="1"/><rect x="619.00" y="80.05" width="1" height="1"/><rect x="624.25" y="80.05" width="1" height="1"/><rect x="598.00" y="85.30" width="1" height="1"/><rect x="603.25" y="85.30" width="1" height="1"/><rect x="608.50" y="85.30" width="1" height="1"/><rect x="613.75" y="85.30" width="1" height="1"/><rect x="619.00" y="85.30" width="1" height="1"/><rect x="624.25" y="85.30" width="1" height="1"/><rect x="598.00" y="90.55" width="1" height="1"/><rect x="603.25" y="90.55" width="1" height="1"/><rect x="608.50" y="90.55" width="1" height="1"/><rect x="613.75" y="90.55" width="1" height="1"/><rect x="619.00" y="90.55" width="1" height="1"/><rect x="624.25" y="90.55" width="1" height="1"/><rect x="598.00" y="95.80" width="1" height="1"/><rect x="603.25" y="95.80" width="1" height="1"/><rect x="608.50" y="95.80" width="1" height="1"/><rect x="613.75" y="95.80" width="1" height="1"/><rect x="619.00" y="95.80" width="1" height="1"/><rect x="624.25" y="95.80" width="1" height="1"/><rect x="598.00" y="101.05" width="1" height="1"/><rect x="603.25" y="101.05" width="1" height="1"/><rect x="608.50" y="101.05" width="1" height="1"/><rect x="613.75" y="101.05" width="1" height="1"/><rect x="619.00" y="101.05" width="1" height="1"/><rect x="624.25" y="101.05" width="1" height="1"/><rect x="598.00" y="106.30" width="1" height="1"/><rect x="603.25" y="106.30" width="1" height="1"/><rect x="608.50" y="106.30" width="1" height="1"/><rect x="613.75" y="106.30" width="1" height="1"/><rect x="619.00" y="106.30" width="1" height="1"/><rect x="624.25" y="106.30" width="1" height="1"/><rect x="598.00" y="111.55" width="1" height="1"/><rect x="603.25" y="111.55" width="1" height="1"/><rect x="608.50" y="111.55" width="1" height="1"/><rect x="613.75" y="111.55" width="1" height="1"/><rect x="619.00" y="111.55" width="1" height="1"/><rect x="624.25" y="111.55" width="1" height="1"/><rect x="598.00" y="116.80" width="1" height="1"/><rect x="603.25" y="116.80" width="1" height="1"/><rect x="608.50" y="116.80" width="1" height="1"/><rect x="613.75" y="116.80" width="1" height="1"/><rect x="619.00" y="116.80" width="1" height="1"/><rect x="624.25" y="116.80" width="1" height="1"/><rect x="598.00" y="122.05" width="1" height="1"/><rect x="603.25" y="122.05" width="1" height="1"/><rect x="608.50" y="122.05" width="1" height="1"/><rect x="613.75" y="122.05" width="1" height="1"/><rect x="619.00" y="122.05" width="1" height="1"/><rect x="624.25" y="122.05" width="1" height="1"/><rect x="598.00" y="127.30" width="1" height="1"/><rect x="603.25" y="127.30" width="1" height="1"/><rect x="608.50" y="127.30" width="1" height="1"/><rect x="613.75" y="127.30" width="1" height="1"/><rect x="619.00" y="127.30" width="1" height="1"/><rect x="624.25" y="127.30" width="1" height="1"/><rect x="598.00" y="132.55" width="1" height="1"/><rect x="603.25" y="132.55" width="1" height="1"/><rect x="608.50" y="132.55" width="1" height="1"/><rect x="613.75" y="132.55" width="1" height="1"/><rect x="619.00" y="132.55" width="1" height="1"/><rect x="624.25" y="132.55" width="1" height="1"/><rect x="598.00" y="137.80" width="1" height="1"/><rect x="603.25" y="137.80" width="1" height="1"/><rect x="608.50" y="137.80" width="1" height="1"/><rect x="613.75" y="137.80" width="1" height="1"/><rect x="619.00" y="137.80" width="1" height="1"/><rect x="624.25" y="137.80" width="1" height="1"/><rect x="598.00" y="143.05" width="1" height="1"/><rect x="603.25" y="143.05" width="1" height="1"/><rect x="608.50" y="143.05" width="1" height="1"/><rect x="613.75" y="143.05" width="1" height="1"/><rect x="619.00" y="143.05" width="1" height="1"/><rect x="624.25" y="143.05" width="1" height="1"/><rect x="598.00" y="148.30" width="1" height="1"/><rect x="603.25" y="148.30" width="1" height="1"/><rect x="608.50" y="148.30" width="1" height="1"/><rect x="613.75" y="148.30" width="1" height="1"/><rect x="619.00" y="148.30" width="1" height="1"/><rect x="624.25" y="148.30" width="1" height="1"/><rect x="598.00" y="153.55" width="1" height="1"/><rect x="603.25" y="153.55" width="1" height="1"/><rect x="608.50" y="153.55" width="1" height="1"/><rect x="613.75" y="153.55" width="1" height="1"/><rect x="619.00" y="153.55" width="1" height="1"/><rect x="624.25" y="153.55" width="1" height="1"/><rect x="598.00" y="158.80" width="1" height="1"/><rect x="603.25" y="158.80" width="1" height="1"/><rect x="608.50" y="158.80" width="1" height="1"/><rect x="613.75" y="158.80" width="1" height="1"/><rect x="619.00" y="158.80" width="1" height="1"/><rect x="624.25" y="158.80" width="1" height="1"/><rect x="598.00" y="164.05" width="1" height="1"/><rect x="603.25" y="164.05" width="1" height="1"/><rect x="608.50" y="164.05" width="1" height="1"/><rect x="613.75" y="164.05" width="1" height="1"/><rect x="619.00" y="164.05" width="1" height="1"/><rect x="624.25" y="164.05" width="1" height="1"/><rect x="598.00" y="169.30" width="1" height="1"/><rect x="603.25" y="169.30" width="1" height="1"/><rect x="608.50" y="169.30" width="1" height="1"/><rect x="613.75" y="169.30" width="1" height="1"/><rect x="619.00" y="169.30" width="1" height="1"/><rect x="624.25" y="169.30" width="1" height="1"/><rect x="598.00" y="174.55" width="1" height="1"/><rect x="603.25" y="174.55" width="1" height="1"/><rect x="608.50" y="174.55" width="1" height="1"/><rect x="613.75" y="174.55" width="1" height="1"/><rect x="619.00" y="174.55" width="1" height="1"/><rect x="624.25" y="174.55" width="1" height="1"/><rect x="598.00" y="179.80" width="1" height="1"/><rect x="603.25" y="179.80" width="1" height="1"/><rect x="608.50" y="179.80" width="1" height="1"/><rect x="613.75" y="179.80" width="1" height="1"/><rect x="619.00" y="179.80" width="1" height="1"/><rect x="624.25" y="179.80" width="1" height="1"/><rect x="598.00" y="185.05" width="1" height="1"/><rect x="603.25" y="185.05" width="1" height="1"/><rect x="608.50" y="185.05" width="1" height="1"/><rect x="613.75" y="185.05" width="1" height="1"/><rect x="619.00" y="185.05" width="1" height="1"/><rect x="624.25" y="185.05" width="1" height="1"/><rect x="598.00" y="190.30" width="1" height="1"/><rect x="603.25" y="190.30" width="1" height="1"/><rect x="608.50" y="190.30" width="1" height="1"/><rect x="613.75" y="190.30" width="1" height="1"/><rect x="619.00" y="190.30" width="1" height="1"/><rect x="624.25" y="190.30" width="1" height="1"/><rect x="598.00" y="195.55" width="1" height="1"/><rect x="603.25" y="195.55" width="1" height="1"/><rect x="608.50" y="195.55" width="1" height="1"/><rect x="613.75" y="195.55" width="1" height="1"/><rect x="619.00" y="195.55" width="1" height="1"/><rect x="624.25" y="195.55" width="1" height="1"/><rect x="598.00" y="200.80" width="1" height="1"/><rect x="603.25" y="200.80" width="1" height="1"/><rect x="608.50" y="200.80" width="1" height="1"/><rect x="613.75" y="200.80" width="1" height="1"/><rect x="619.00" y="200.80" width="1" height="1"/><rect x="624.25" y="200.80" width="1" height="1"/><rect x="598.00" y="206.05" width="1" height="1"/><rect x="603.25" y="206.05" width="1" height="1"/><rect x="608.50" y="206.05" width="1" height="1"/><rect x="613.75" y="206.05" width="1" height="1"/><rect x="619.00" y="206.05" width="1" height="1"/><rect x="624.25" y="206.05" width="1" height="1"/><rect x="598.00" y="211.30" width="1" height="1"/><rect x="603.25" y="211.30" width="1" height="1"/><rect x="608.50" y="211.30" width="1" height="1"/><rect x="613.75" y="211.30" width="1" height="1"/><rect x="619.00" y="211.30" width="1" height="1"/><rect x="624.25" y="211.30" width="1" height="1"/><rect x="598.00" y="216.55" width="1" height="1"/><rect x="603.25" y="216.55" width="1" height="1"/><rect x="608.50" y="216.55" width="1" height="1"/><rect x="613.75" y="216.55" width="1" height="1"/><rect x="619.00" y="216.55" width="1" height="1"/><rect x="624.25" y="216.55" width="1" height="1"/><rect x="598.00" y="221.80" width="1" height="1"/><rect x="603.25" y="221.80" width="1" height="1"/><rect x="608.50" y="221.80" width="1" height="1"/><rect x="613.75" y="221.80" width="1" height="1"/><rect x="619.00" y="221.80" width="1" height="1"/><rect x="624.25" y="221.80" width="1" height="1"/><rect x="598.00" y="227.05" width="1" height="1"/><rect x="603.25" y="227.05" width="1" height="1"/><rect x="608.50" y="227.05" width="1" height="1"/><rect x="613.75" y="227.05" width="1" height="1"/><rect x="619.00" y="227.05" width="1" height="1"/><rect x="624.25" y="227.05" width="1" height="1"/><rect x="598.00" y="232.30" width="1" height="1"/><rect x="603.25" y="232.30" width="1" height="1"/><rect x="608.50" y="232.30" width="1" height="1"/><rect x="613.75" y="232.30" width="1" height="1"/><rect x="619.00" y="232.30" width="1" height="1"/><rect x="624.25" y="232.30" width="1" height="1"/><rect x="598.00" y="237.55" width="1" height="1"/><rect x="603.25" y="237.55" width="1" height="1"/><rect x="608.50" y="237.55" width="1" height="1"/><rect x="613.75" y="237.55" width="1" height="1"/><rect x="619.00" y="237.55" width="1" height="1"/><rect x="624.25" y="237.55" width="1" height="1"/><rect x="598.00" y="242.80" width="1" height="1"/><rect x="603.25" y="242.80" width="1" height="1"/><rect x="608.50" y="242.80" width="1" height="1"/><rect x="613.75" y="242.80" width="1" height="1"/><rect x="619.00" y="242.80" width="1" height="1"/><rect x="624.25" y="242.80" width="1" height="1"/><rect x="598.00" y="248.05" width="1" height="1"/><rect x="603.25" y="248.05" width="1" height="1"/><rect x="608.50" y="248.05" width="1" height="1"/><rect x="613.75" y="248.05" width="1" height="1"/><rect x="619.00" y="248.05" width="1" height="1"/><rect x="624.25" y="248.05" width="1" height="1"/><rect x="598.00" y="253.30" width="1" height="1"/><rect x="603.25" y="253.30" width="1" height="1"/><rect x="608.50" y="253.30" width="1" height="1"/><rect x="613.75" y="253.30" width="1" height="1"/><rect x="619.00" y="253.30" width="1" height="1"/><rect x="624.25" y="253.30" width="1" height="1"/><rect x="598.00" y="258.55" width="1" height="1"/><rect x="603.25" y="258.55" width="1" height="1"/><rect x="608.50" y="258.55" width="1" height="1"/><rect x="613.75" y="258.55" width="1" height="1"/><rect x="619.00" y="258.55" width="1" height="1"/><rect x="624.25" y="258.55" width="1" height="1"/><rect x="598.00" y="263.80" width="1" height="1"/><rect x="603.25" y="263.80" width="1" height="1"/><rect x="608.50" y="263.80" width="1" height="1"/><rect x="613.75" y="263.80" width="1" height="1"/><rect x="619.00" y="263.80" width="1" height="1"/><rect x="624.25" y="263.80" width="1" height="1"/><rect x="598.00" y="269.05" width="1" height="1"/><rect x="603.25" y="269.05" width="1" height="1"/><rect x="608.50" y="269.05" width="1" height="1"/><rect x="613.75" y="269.05" width="1" height="1"/><rect x="619.00" y="269.05" width="1" height="1"/><rect x="624.25" y="269.05" width="1" height="1"/><rect x="598.00" y="274.30" width="1" height="1"/><rect x="603.25" y="274.30" width="1" height="1"/><rect x="608.50" y="274.30" width="1" height="1"/><rect x="613.75" y="274.30" width="1" height="1"/><rect x="619.00" y="274.30" width="1" height="1"/><rect x="624.25" y="274.30" width="1" height="1"/><rect x="598.00" y="279.55" width="1" height="1"/><rect x="603.25" y="279.55" width="1" height="1"/><rect x="608.50" y="279.55" width="1" height="1"/><rect x="613.75" y="279.55" width="1" height="1"/><rect x="619.00" y="279.55" width="1" height="1"/><rect x="624.25" y="279.55" width="1" height="1"/><rect x="598.00" y="284.80" width="1" height="1"/><rect x="603.25" y="284.80" width="1" height="1"/><rect x="608.50" y="284.80" width="1" height="1"/><rect x="613.75" y="284.80" width="1" height="1"/><rect x="619.00" y="284.80" width="1" height="1"/><rect x="624.25" y="284.80" width="1" height="1"/><rect x="598.00" y="290.05" width="1" height="1"/><rect x="603.25" y="290.05" width="1" height="1"/><rect x="608.50" y="290.05" width="1" height="1"/><rect x="613.75" y="290.05" width="1" height="1"/><rect x="619.00" y="290.05" width="1" height="1"/><rect x="624.25" y="290.05" width="1" height="1"/><rect x="598.00" y="295.30" width="1" height="1"/><rect x="603.25" y="295.30" width="1" height="1"/><rect x="608.50" y="295.30" width="1" height="1"/><rect x="613.75" y="295.30" width="1" height="1"/><rect x="619.00" y="295.30" width="1" height="1"/><rect x="624.25" y="295.30" width="1" height="1"/><rect x="598.00" y="300.55" width="1" height="1"/><rect x="603.25" y="300.55" width="1" height="1"/><rect x="608.50" y="300.55" width="1" height="1"/><rect x="613.75" y="300.55" width="1" height="1"/><rect x="619.00" y="300.55" width="1" height="1"/><rect x="624.25" y="300.55" width="1" height="1"/><rect x="598.00" y="305.80" width="1" height="1"/><rect x="603.25" y="305.80" width="1" height="1"/><rect x="608.50" y="305.80" width="1" height="1"/><rect x="613.75" y="305.80" width="1" height="1"/><rect x="619.00" y="305.80" width="1" height="1"/><rect x="624.25" y="305.80" width="1" height="1"/><rect x="598.00" y="311.05" width="1" height="1"/><rect x="603.25" y="311.05" width="1" height="1"/><rect x="608.50" y="311.05" width="1" height="1"/><rect x="613.75" y="311.05" width="1" height="1"/><rect x="619.00" y="311.05" width="1" height="1"/><rect x="624.25" y="311.05" width="1" height="1"/><rect x="598.00" y="316.30" width="1" height="1"/><rect x="603.25" y="316.30" width="1" height="1"/><rect x="608.50" y="316.30" width="1" height="1"/><rect x="613.75" y="316.30" width="1" height="1"/><rect x="619.00" y="316.30" width="1" height="1"/><rect x="624.25" y="316.30" width="1" height="1"/><rect x="598.00" y="321.55" width="1" height="1"/><rect x="603.25" y="321.55" width="1" height="1"/><rect x="608.50" y="321.55" width="1" height="1"/><rect x="613.75" y="321.55" width="1" height="1"/><rect x="619.00" y="321.55" width="1" height="1"/><rect x="624.25" y="321.55" width="1" height="1"/><rect x="598.00" y="326.80" width="1" height="1"/><rect x="603.25" y="326.80" width="1" height="1"/><rect x="608.50" y="326.80" width="1" height="1"/><rect x="613.75" y="326.80" width="1" height="1"/><rect x="619.00" y="326.80" width="1" height="1"/><rect x="624.25" y="326.80" width="1" height="1"/><rect x="598.00" y="332.05" width="1" height="1"/><rect x="603.25" y="332.05" width="1" height="1"/><rect x="608.50" y="332.05" width="1" height="1"/><rect x="613.75" y="332.05" width="1" height="1"/><rect x="619.00" y="332.05" width="1" height="1"/><rect x="624.25" y="332.05" width="1" height="1"/><rect x="598.00" y="337.30" width="1" height="1"/><rect x="603.25" y="337.30" width="1" height="1"/><rect x="608.50" y="337.30" width="1" height="1"/><rect x="613.75" y="337.30" width="1" height="1"/><rect x="619.00" y="337.30" width="1" height="1"/><rect x="624.25" y="337.30" width="1" height="1"/><rect x="598.00" y="342.55" width="1" height="1"/><rect x="603.25" y="342.55" width="1" height="1"/><rect x="608.50" y="342.55" width="1" height="1"/><rect x="613.75" y="342.55" width="1" height="1"/><rect x="619.00" y="342.55" width="1" height="1"/><rect x="624.25" y="342.55" width="1" height="1"/><rect x="598.00" y="347.80" width="1" height="1"/><rect x="603.25" y="347.80" width="1" height="1"/><rect x="608.50" y="347.80" width="1" height="1"/><rect x="613.75" y="347.80" width="1" height="1"/><rect x="619.00" y="347.80" width="1" height="1"/><rect x="624.25" y="347.80" width="1" height="1"/><rect x="598.00" y="353.05" width="1" height="1"/><rect x="603.25" y="353.05" width="1" height="1"/><rect x="608.50" y="353.05" width="1" height="1"/><rect x="613.75" y="353.05" width="1" height="1"/><rect x="619.00" y="353.05" width="1" height="1"/><rect x="624.25" y="353.05" width="1" height="1"/><rect x="598.00" y="358.30" width="1" height="1"/><rect x="603.25" y="358.30" width="1" height="1"/><rect x="608.50" y="358.30" width="1" height="1"/><rect x="613.75" y="358.30" width="1" height="1"/><rect x="619.00" y="358.30" width="1" height="1"/><rect x="624.25" y="358.30" width="1" height="1"/><rect x="598.00" y="363.55" width="1" height="1"/><rect x="603.25" y="363.55" width="1" height="1"/><rect x="608.50" y="363.55" width="1" height="1"/><rect x="613.75" y="363.55" width="1" height="1"/><rect x="619.00" y="363.55" width="1" height="1"/><rect x="624.25" y="363.55" width="1" height="1"/><rect x="598.00" y="368.80" width="1" height="1"/><rect x="603.25" y="368.80" width="1" height="1"/><rect x="608.50" y="368.80" width="1" height="1"/><rect x="613.75" y="368.80" width="1" height="1"/><rect x="619.00" y="368.80" width="1" height="1"/><rect x="624.25" y="368.80" width="1" height="1"/><rect x="598.00" y="374.05" width="1" height="1"/><rect x="603.25" y="374.05" width="1" height="1"/><rect x="608.50" y="374.05" width="1" height="1"/><rect x="613.75" y="374.05" width="1" height="1"/><rect x="619.00" y="374.05" width="1" height="1"/><rect x="624.25" y="374.05" width="1" height="1"/><rect x="598.00" y="379.30" width="1" height="1"/><rect x="603.25" y="379.30" width="1" height="1"/><rect x="608.50" y="379.30" width="1" height="1"/><rect x="613.75" y="379.30" width="1" height="1"/><rect x="619.00" y="379.30" width="1" height="1"/><rect x="624.25" y="379.30" width="1" height="1"/><rect x="598.00" y="384.55" width="1" height="1"/><rect x="603.25" y="384.55" width="1" height="1"/><rect x="608.50" y="384.55" width="1" height="1"/><rect x="613.75" y="384.55" width="1" height="1"/><rect x="619.00" y="384.55" width="1" height="1"/><rect x="624.25" y="384.55" width="1" height="1"/><rect x="598.00" y="389.80" width="1" height="1"/><rect x="603.25" y="389.80" width="1" height="1"/><rect x="608.50" y="389.80" width="1" height="1"/><rect x="613.75" y="389.80" width="1" height="1"/><rect x="619.00" y="389.80" width="1" height="1"/><rect x="624.25" y="389.80" width="1" height="1"/><rect x="598.00" y="395.05" width="1" height="1"/><rect x="603.25" y="395.05" width="1" height="1"/><rect x="608.50" y="395.05" width="1" height="1"/><rect x="613.75" y="395.05" width="1" height="1"/><rect x="619.00" y="395.05" width="1" height="1"/><rect x="624.25" y="395.05" width="1" height="1"/><rect x="598.00" y="400.30" width="1" height="1"/><rect x="603.25" y="400.30" width="1" height="1"/><rect x="608.50" y="400.30" width="1" height="1"/><rect x="613.75" y="400.30" width="1" height="1"/><rect x="619.00" y="400.30" width="1" height="1"/><rect x="624.25" y="400.30" width="1" height="1"/><rect x="598.00" y="405.55" width="1" height="1"/><rect x="603.25" y="405.55" width="1" height="1"/><rect x="608.50" y="405.55" width="1" height="1"/><rect x="613.75" y="405.55" width="1" height="1"/><rect x="619.00" y="405.55" width="1" height="1"/><rect x="624.25" y="405.55" width="1" height="1"/><rect x="598.00" y="410.80" width="1" height="1"/><rect x="603.25" y="410.80" width="1" height="1"/><rect x="608.50" y="410.80" width="1" height="1"/><rect x="613.75" y="410.80" width="1" height="1"/><rect x="619.00" y="410.80" width="1" height="1"/><rect x="624.25" y="410.80" width="1" height="1"/><rect x="598.00" y="416.05" width="1" height="1"/><rect x="603.25" y="416.05" width="1" height="1"/><rect x="608.50" y="416.05" width="1" height="1"/><rect x="613.75" y="416.05" width="1" height="1"/><rect x="619.00" y="416.05" width="1" height="1"/><rect x="624.25" y="416.05" width="1" height="1"/><rect x="598.00" y="421.30" width="1" height="1"/><rect x="603.25" y="421.30" width="1" height="1"/><rect x="608.50" y="421.30" width="1" height="1"/><rect x="613.75" y="421.30" width="1" height="1"/><rect x="619.00" y="421.30" width="1" height="1"/><rect x="624.25" y="421.30" width="1" height="1"/><rect x="598.00" y="426.55" width="1" height="1"/><rect x="603.25" y="426.55" width="1" height="1"/><rect x="608.50" y="426.55" width="1" height="1"/><rect x="613.75" y="426.55" width="1" height="1"/><rect x="619.00" y="426.55" width="1" height="1"/><rect x="624.25" y="426.55" width="1" height="1"/><rect x="598.00" y="431.80" width="1" height="1"/><rect x="603.25" y="431.80" width="1" height="1"/><rect x="608.50" y="431.80" width="1" height="1"/><rect x="613.75" y="431.80" width="1" height="1"/><rect x="619.00" y="431.80" width="1" height="1"/><rect x="624.25" y="431.80" width="1" height="1"/><rect x="88.75" y="437.05" width="1" height="1"/><rect x="94.00" y="437.05" width="1" height="1"/><rect x="99.25" y="437.05" width="1" height="1"/><rect x="104.50" y="437.05" width="1" height="1"/><rect x="109.75" y="437.05" width="1" height="1"/><rect x="115.00" y="437.05" width="1" height="1"/><rect x="120.25" y="437.05" width="1" height="1"/><rect x="125.50" y="437.05" width="1" height="1"/><rect x="130.75" y="437.05" width="1" height="1"/><rect x="136.00" y="437.05" width="1" height="1"/><rect x="141.25" y="437.05" width="1" height="1"/><rect x="146.50" y="437.05" width="1" height="1"/><rect x="151.75" y="437.05" width="1" height="1"/><rect x="157.00" y="437.05" width="1" height="1"/><rect x="162.25" y="437.05" width="1" height="1"/><rect x="167.50" y="437.05" width="1" height="1"/><rect x="172.75" y="437.05" width="1" height="1"/><rect x="178.00" y="437.05" width="1" height="1"/><rect x="183.25" y="437.05" width="1" height="1"/><rect x="188.50" y="437.05" width="1" height="1"/><rect x="193.75" y="437.05" width="1" height="1"/><rect x="199.00" y="437.05" width="1" height="1"/><rect x="204.25" y="437.05" width="1" height="1"/><rect x="209.50" y="437.05" width="1" height="1"/><rect x="214.75" y="437.05" width="1" height="1"/><rect x="220.00" y="437.05" width="1" height="1"/><rect x="225.25" y="437.05" width="1" height="1"/><rect x="230.50" y="437.05" width="1" height="1"/><rect x="235.75" y="437.05" width="1" height="1"/><rect x="241.00" y="437.05" width="1" height="1"/><rect x="246.25" y="437.05" width="1" height="1"/><rect x="251.50" y="437.05" width="1" height="1"/><rect x="256.75" y="437.05" width="1" height="1"/><rect x="262.00" y="437.05" width="1" height="1"/><rect x="267.25" y="437.05" width="1" height="1"/><rect x="272.50" y="437.05" width="1" height="1"/><rect x="277.75" y="437.05" width="1" height="1"/><rect x="283.00" y="437.05" width="1" height="1"/><rect x="288.25" y="437.05" width="1" height="1"/><rect x="293.50" y="437.05" width="1" height="1"/><rect x="298.75" y="437.05" width="1" height="1"/><rect x="304.00" y="437.05" width="1" height="1"/><rect x="309.25" y="437.05" width="1" height="1"/><rect x="314.50" y="437.05" width="1" height="1"/><rect x="319.75" y="437.05" width="1" height="1"/><rect x="325.00" y="437.05" width="1" height="1"/><rect x="330.25" y="437.05" width="1" height="1"/><rect x="335.50" y="437.05" width="1" height="1"/><rect x="340.75" y="437.05" width="1" height="1"/><rect x="346.00" y="437.05" width="1" height="1"/><rect x="351.25" y="437.05" width="1" height="1"/><rect x="356.50" y="437.05" width="1" height="1"/><rect x="361.75" y="437.05" width="1" height="1"/><rect x="367.00" y="437.05" width="1" height="1"/><rect x="372.25" y="437.05" width="1" height="1"/><rect x="377.50" y="437.05" width="1" height="1"/><rect x="382.75" y="437.05" width="1" height="1"/><rect x="388.00" y="437.05" width="1" height="1"/><rect x="393.25" y="437.05" width="1" height="1"/><rect x="398.50" y="437.05" width="1" height="1"/><rect x="403.75" y="437.05" width="1" height="1"/><rect x="409.00" y="437.05" width="1" height="1"/><rect x="414.25" y="437.05" width="1" height="1"/><rect x="419.50" y="437.05" width="1" height="1"/><rect x="424.75" y="437.05" width="1" height="1"/><rect x="430.00" y="437.05" width="1" height="1"/><rect x="435.25" y="437.05" width="1" height="1"/><rect x="440.50" y="437.05" width="1" height="1"/><rect x="445.75" y="437.05" width="1" height="1"/><rect x="451.00" y="437.05" width="1" height="1"/><rect x="456.25" y="437.05" width="1" height="1"/><rect x="461.50" y="437.05" width="1" height="1"/><rect x="466.75" y="437.05" width="1" height="1"/><rect x="472.00" y="437.05" width="1" height="1"/><rect x="477.25" y="437.05" width="1" height="1"/><rect x="482.50" y="437.05" width="1" height="1"/><rect x="487.75" y="437.05" width="1" height="1"/><rect x="493.00" y="437.05" width="1" height="1"/><rect x="498.25" y="437.05" width="1" height="1"/><rect x="503.50" y="437.05" width="1" height="1"/><rect x="508.75" y="437.05" width="1" height="1"/><rect x="514.00" y="437.05" width="1" height="1"/><rect x="519.25" y="437.05" width="1" height="1"/><rect x="524.50" y="437.05" width="1" height="1"/><rect x="529.75" y="437.05" width="1" height="1"/><rect x="535.00" y="437.05" width="1" height="1"/><rect x="540.25" y="437.05" width="1" height="1"/><rect x="545.50" y="437.05" width="1" height="1"/><rect x="550.75" y="437.05" width="1" height="1"/><rect x="556.00" y="437.05" width="1" height="1"/><rect x="561.25" y="437.05" width="1" height="1"/><rect x="566.50" y="437.05" width="1" height="1"/><rect x="571.75" y="437.05" width="1" height="1"/><rect x="577.00" y="437.05" width="1" height="1"/><rect x="582.25" y="437.05" width="1" height="1"/><rect x="587.50" y="437.05" width="1" height="1"/><rect x="592.75" y="437.05" width="1" height="1"/><rect x="598.00" y="437.05" width="1" height="1"/><rect x="603.25" y="437.05" width="1" height="1"/><rect x="608.50" y="437.05" width="1" height="1"/><rect x="613.75" y="437.05" width="1" height="1"/><rect x="619.00" y="437.05" width="1" height="1"/><rect x="624.25" y="437.05" width="1" height="1"/></svg>
<div style="left:88.80px;top:48.60px;width:515.60px;height:1.30px;background:#8484D0"></div>
<div style="left:602.90px;top:48.80px;width:1.70px;height:368.40px;background:#8888D0"></div>
<div style="left:590.00px;top:416.00px;width:14.30px;height:1.20px;background:#8484D0"></div>
<div style="left:35.20px;top:49.80px;width:560.60px;height:383.40px;background:#0A3FE0;border-radius:3.5px 3.5px 0 0"></div>
<div style="left:35.80px;top:49.80px;width:559.40px;height:16.20px;background:linear-gradient(#3E8EFF 0%,#1A6AF4 10%,#0455E2 22%,#0052DE 60%,#0A68F4 86%,#0A5CE8 93%,#003CBE 100%);border-radius:3.5px 3.5px 0 0"></div>
<div style="left:37.60px;top:66.00px;width:555.80px;height:364.80px;background:#ECE9D8"></div>
<div style="left:37.60px;top:66.00px;width:1.60px;height:364.80px;background:#F8F6EA"></div>
<svg style="position:absolute;left:39.00px;top:54.40px;overflow:visible" width="7.8" height="8.2" viewBox="0 0 7.8 8.2"><rect width="7.8" height="8.2" fill="#181010"/><path d="M0 1.6L2 0.8L3.6 2L5.6 0.6L7.8 1.4V2.8H0Z" fill="#E01818"/><path d="M0 4.2L2 3.4L3.8 4.6L6 2.6L7.8 3V5L6 4.6L3.8 6L2 5L0 5.6Z" fill="#10C010"/><path d="M0 6.4L2.2 5.8L4 6.8L6 5.6L7.8 6.2V8.2H0Z" fill="#1830E0"/></svg>
<div style="left:49.40px;top:55.48px;font-family:'Liberation Sans', sans-serif;font-size:7.7px;line-height:7.7px;white-space:nowrap;color:#FFFFFF;font-weight:bold;transform:scale(0.8304,1.0000);transform-origin:0 0;will-change:transform;">ANALOGUE ANALYSIS - PROSPICE</div>
<div style="left:556.00px;top:53.40px;width:11.00px;height:11.00px;background:#3570F0;border:1px solid rgba(255,255,255,0.85);box-sizing:border-box;border-radius:2px"></div>
<div style="left:558.75px;top:60.66px;width:3.96px;height:1.65px;background:#fff"></div>
<div style="left:568.60px;top:53.40px;width:11.00px;height:11.00px;background:#3570F0;border:1px solid rgba(255,255,255,0.85);box-sizing:border-box;border-radius:2px"></div>
<div style="left:571.02px;top:55.82px;width:6.16px;height:5.72px;border:1px solid #fff;border-top-width:2px;box-sizing:border-box"></div>
<div style="left:581.00px;top:53.40px;width:11.00px;height:11.00px;background:#E35A2E;border:1px solid rgba(255,255,255,0.85);box-sizing:border-box;border-radius:2px"></div>
<svg style="position:absolute;left:581.00px;top:53.40px;overflow:visible" width="11" height="11" viewBox="0 0 11 11"><path d="M3.08 3.08L7.92 7.92M7.92 3.08L3.08 7.92" stroke="#fff" stroke-width="1.6"/></svg>
<div style="left:40.50px;top:67.36px;font-family:'Liberation Sans', sans-serif;font-size:7.2px;line-height:7.2px;white-space:nowrap;color:#000;transform:scale(0.7068,1.0000);transform-origin:0 0;will-change:transform;-webkit-text-stroke:0.12px currentColor;">File</div>
<div style="left:56.00px;top:67.36px;font-family:'Liberation Sans', sans-serif;font-size:7.2px;line-height:7.2px;white-space:nowrap;color:#000;transform:scale(0.7754,1.0000);transform-origin:0 0;will-change:transform;-webkit-text-stroke:0.12px currentColor;">View</div>
<div style="left:74.50px;top:67.36px;font-family:'Liberation Sans', sans-serif;font-size:7.2px;line-height:7.2px;white-space:nowrap;color:#000;transform:scale(0.7746,1.0000);transform-origin:0 0;will-change:transform;-webkit-text-stroke:0.12px currentColor;">Graph</div>
<div style="left:96.60px;top:67.36px;font-family:'Liberation Sans', sans-serif;font-size:7.2px;line-height:7.2px;white-space:nowrap;color:#000;transform:scale(0.7818,1.0000);transform-origin:0 0;will-change:transform;-webkit-text-stroke:0.12px currentColor;">Options</div>
<div style="left:122.60px;top:67.36px;font-family:'Liberation Sans', sans-serif;font-size:7.2px;line-height:7.2px;white-space:nowrap;color:#000;transform:scale(0.7699,1.0000);transform-origin:0 0;will-change:transform;-webkit-text-stroke:0.12px currentColor;">Help</div>
<div style="left:40.00px;top:78.20px;width:551.60px;height:0.80px;background:#FFF4F4"></div>
<div style="left:40.20px;top:79.20px;width:551.00px;height:7.20px;background:#00C000"></div>
<div style="left:266.09px;top:79.74px;font-family:'Liberation Mono', monospace;font-size:8.0px;line-height:8.0px;white-space:nowrap;color:#004C00;will-change:transform;letter-spacing:0.93px;">ANALOGUE&nbsp;ANALYSIS</div>
<div style="left:40.20px;top:86.40px;width:551.00px;height:327.20px;background:#001E00"></div>
<svg style="position:absolute;left:0;top:0" width="632" height="460" fill="#8C9A8A"><rect x="63.40" y="87.95" width="1" height="318.70"/><rect x="113.72" y="87.95" width="1" height="318.70"/><rect x="164.04" y="87.95" width="1" height="318.70"/><rect x="214.36" y="87.95" width="1" height="318.70"/><rect x="264.68" y="87.95" width="1" height="318.70"/><rect x="315.00" y="87.95" width="1" height="318.70"/><rect x="365.32" y="87.95" width="1" height="318.70"/><rect x="415.64" y="87.95" width="1" height="318.70"/><rect x="465.96" y="87.95" width="1" height="318.70"/><rect x="516.28" y="87.95" width="1" height="318.70"/><rect x="566.60" y="87.95" width="1" height="318.70"/><rect x="63.40" y="87.95" width="504.20" height="1"/><rect x="63.40" y="119.72" width="504.20" height="1"/><rect x="63.40" y="151.49" width="504.20" height="1"/><rect x="63.40" y="183.26" width="504.20" height="1"/><rect x="63.40" y="215.03" width="504.20" height="1"/><rect x="63.40" y="278.57" width="504.20" height="1"/><rect x="63.40" y="310.34" width="504.20" height="1"/><rect x="63.40" y="342.11" width="504.20" height="1"/><rect x="63.40" y="373.88" width="504.20" height="1"/><rect x="63.40" y="405.65" width="504.20" height="1"/><rect x="63.90" y="88.10" width="1.2" height="0.7"/><rect x="565.90" y="88.10" width="1.2" height="0.7"/><rect x="63.50" y="404.45" width="0.8" height="1.7"/><rect x="63.90" y="91.28" width="1.2" height="0.7"/><rect x="565.90" y="91.28" width="1.2" height="0.7"/><rect x="68.53" y="404.45" width="0.8" height="1.7"/><rect x="63.90" y="94.45" width="1.2" height="0.7"/><rect x="565.90" y="94.45" width="1.2" height="0.7"/><rect x="73.56" y="404.45" width="0.8" height="1.7"/><rect x="63.90" y="97.63" width="1.2" height="0.7"/><rect x="565.90" y="97.63" width="1.2" height="0.7"/><rect x="78.60" y="404.45" width="0.8" height="1.7"/><rect x="63.90" y="100.81" width="1.2" height="0.7"/><rect x="565.90" y="100.81" width="1.2" height="0.7"/><rect x="83.63" y="404.45" width="0.8" height="1.7"/><rect x="63.90" y="103.99" width="1.2" height="0.7"/><rect x="565.90" y="103.99" width="1.2" height="0.7"/><rect x="88.66" y="404.45" width="0.8" height="1.7"/><rect x="63.90" y="107.16" width="1.2" height="0.7"/><rect x="565.90" y="107.16" width="1.2" height="0.7"/><rect x="93.69" y="404.45" width="0.8" height="1.7"/><rect x="63.90" y="110.34" width="1.2" height="0.7"/><rect x="565.90" y="110.34" width="1.2" height="0.7"/><rect x="98.72" y="404.45" width="0.8" height="1.7"/><rect x="63.90" y="113.52" width="1.2" height="0.7"/><rect x="565.90" y="113.52" width="1.2" height="0.7"/><rect x="103.76" y="404.45" width="0.8" height="1.7"/><rect x="63.90" y="116.69" width="1.2" height="0.7"/><rect x="565.90" y="116.69" width="1.2" height="0.7"/><rect x="108.79" y="404.45" width="0.8" height="1.7"/><rect x="63.90" y="119.87" width="1.2" height="0.7"/><rect x="565.90" y="119.87" width="1.2" height="0.7"/><rect x="113.82" y="404.45" width="0.8" height="1.7"/><rect x="63.90" y="123.05" width="1.2" height="0.7"/><rect x="565.90" y="123.05" width="1.2" height="0.7"/><rect x="118.85" y="404.45" width="0.8" height="1.7"/><rect x="63.90" y="126.22" width="1.2" height="0.7"/><rect x="565.90" y="126.22" width="1.2" height="0.7"/><rect x="123.88" y="404.45" width="0.8" height="1.7"/><rect x="63.90" y="129.40" width="1.2" height="0.7"/><rect x="565.90" y="129.40" width="1.2" height="0.7"/><rect x="128.92" y="404.45" width="0.8" height="1.7"/><rect x="63.90" y="132.58" width="1.2" height="0.7"/><rect x="565.90" y="132.58" width="1.2" height="0.7"/><rect x="133.95" y="404.45" width="0.8" height="1.7"/><rect x="63.90" y="135.76" width="1.2" height="0.7"/><rect x="565.90" y="135.76" width="1.2" height="0.7"/><rect x="138.98" y="404.45" width="0.8" height="1.7"/><rect x="63.90" y="138.93" width="1.2" height="0.7"/><rect x="565.90" y="138.93" width="1.2" height="0.7"/><rect x="144.01" y="404.45" width="0.8" height="1.7"/><rect x="63.90" y="142.11" width="1.2" height="0.7"/><rect x="565.90" y="142.11" width="1.2" height="0.7"/><rect x="149.04" y="404.45" width="0.8" height="1.7"/><rect x="63.90" y="145.29" width="1.2" height="0.7"/><rect x="565.90" y="145.29" width="1.2" height="0.7"/><rect x="154.08" y="404.45" width="0.8" height="1.7"/><rect x="63.90" y="148.46" width="1.2" height="0.7"/><rect x="565.90" y="148.46" width="1.2" height="0.7"/><rect x="159.11" y="404.45" width="0.8" height="1.7"/><rect x="63.90" y="151.64" width="1.2" height="0.7"/><rect x="565.90" y="151.64" width="1.2" height="0.7"/><rect x="164.14" y="404.45" width="0.8" height="1.7"/><rect x="63.90" y="154.82" width="1.2" height="0.7"/><rect x="565.90" y="154.82" width="1.2" height="0.7"/><rect x="169.17" y="404.45" width="0.8" height="1.7"/><rect x="63.90" y="157.99" width="1.2" height="0.7"/><rect x="565.90" y="157.99" width="1.2" height="0.7"/><rect x="174.20" y="404.45" width="0.8" height="1.7"/><rect x="63.90" y="161.17" width="1.2" height="0.7"/><rect x="565.90" y="161.17" width="1.2" height="0.7"/><rect x="179.24" y="404.45" width="0.8" height="1.7"/><rect x="63.90" y="164.35" width="1.2" height="0.7"/><rect x="565.90" y="164.35" width="1.2" height="0.7"/><rect x="184.27" y="404.45" width="0.8" height="1.7"/><rect x="63.90" y="167.53" width="1.2" height="0.7"/><rect x="565.90" y="167.53" width="1.2" height="0.7"/><rect x="189.30" y="404.45" width="0.8" height="1.7"/><rect x="63.90" y="170.70" width="1.2" height="0.7"/><rect x="565.90" y="170.70" width="1.2" height="0.7"/><rect x="194.33" y="404.45" width="0.8" height="1.7"/><rect x="63.90" y="173.88" width="1.2" height="0.7"/><rect x="565.90" y="173.88" width="1.2" height="0.7"/><rect x="199.36" y="404.45" width="0.8" height="1.7"/><rect x="63.90" y="177.06" width="1.2" height="0.7"/><rect x="565.90" y="177.06" width="1.2" height="0.7"/><rect x="204.40" y="404.45" width="0.8" height="1.7"/><rect x="63.90" y="180.23" width="1.2" height="0.7"/><rect x="565.90" y="180.23" width="1.2" height="0.7"/><rect x="209.43" y="404.45" width="0.8" height="1.7"/><rect x="63.90" y="183.41" width="1.2" height="0.7"/><rect x="565.90" y="183.41" width="1.2" height="0.7"/><rect x="214.46" y="404.45" width="0.8" height="1.7"/><rect x="63.90" y="186.59" width="1.2" height="0.7"/><rect x="565.90" y="186.59" width="1.2" height="0.7"/><rect x="219.49" y="404.45" width="0.8" height="1.7"/><rect x="63.90" y="189.76" width="1.2" height="0.7"/><rect x="565.90" y="189.76" width="1.2" height="0.7"/><rect x="224.52" y="404.45" width="0.8" height="1.7"/><rect x="63.90" y="192.94" width="1.2" height="0.7"/><rect x="565.90" y="192.94" width="1.2" height="0.7"/><rect x="229.56" y="404.45" width="0.8" height="1.7"/><rect x="63.90" y="196.12" width="1.2" height="0.7"/><rect x="565.90" y="196.12" width="1.2" height="0.7"/><rect x="234.59" y="404.45" width="0.8" height="1.7"/><rect x="63.90" y="199.29" width="1.2" height="0.7"/><rect x="565.90" y="199.29" width="1.2" height="0.7"/><rect x="239.62" y="404.45" width="0.8" height="1.7"/><rect x="63.90" y="202.47" width="1.2" height="0.7"/><rect x="565.90" y="202.47" width="1.2" height="0.7"/><rect x="244.65" y="404.45" width="0.8" height="1.7"/><rect x="63.90" y="205.65" width="1.2" height="0.7"/><rect x="565.90" y="205.65" width="1.2" height="0.7"/><rect x="249.68" y="404.45" width="0.8" height="1.7"/><rect x="63.90" y="208.83" width="1.2" height="0.7"/><rect x="565.90" y="208.83" width="1.2" height="0.7"/><rect x="254.72" y="404.45" width="0.8" height="1.7"/><rect x="63.90" y="212.00" width="1.2" height="0.7"/><rect x="565.90" y="212.00" width="1.2" height="0.7"/><rect x="259.75" y="404.45" width="0.8" height="1.7"/><rect x="63.90" y="215.18" width="1.2" height="0.7"/><rect x="565.90" y="215.18" width="1.2" height="0.7"/><rect x="264.78" y="404.45" width="0.8" height="1.7"/><rect x="63.90" y="218.36" width="1.2" height="0.7"/><rect x="565.90" y="218.36" width="1.2" height="0.7"/><rect x="269.81" y="404.45" width="0.8" height="1.7"/><rect x="63.90" y="221.53" width="1.2" height="0.7"/><rect x="565.90" y="221.53" width="1.2" height="0.7"/><rect x="274.84" y="404.45" width="0.8" height="1.7"/><rect x="63.90" y="224.71" width="1.2" height="0.7"/><rect x="565.90" y="224.71" width="1.2" height="0.7"/><rect x="279.88" y="404.45" width="0.8" height="1.7"/><rect x="63.90" y="227.89" width="1.2" height="0.7"/><rect x="565.90" y="227.89" width="1.2" height="0.7"/><rect x="284.91" y="404.45" width="0.8" height="1.7"/><rect x="63.90" y="231.07" width="1.2" height="0.7"/><rect x="565.90" y="231.07" width="1.2" height="0.7"/><rect x="289.94" y="404.45" width="0.8" height="1.7"/><rect x="63.90" y="234.24" width="1.2" height="0.7"/><rect x="565.90" y="234.24" width="1.2" height="0.7"/><rect x="294.97" y="404.45" width="0.8" height="1.7"/><rect x="63.90" y="237.42" width="1.2" height="0.7"/><rect x="565.90" y="237.42" width="1.2" height="0.7"/><rect x="300.00" y="404.45" width="0.8" height="1.7"/><rect x="63.90" y="240.60" width="1.2" height="0.7"/><rect x="565.90" y="240.60" width="1.2" height="0.7"/><rect x="305.04" y="404.45" width="0.8" height="1.7"/><rect x="63.90" y="243.77" width="1.2" height="0.7"/><rect x="565.90" y="243.77" width="1.2" height="0.7"/><rect x="310.07" y="404.45" width="0.8" height="1.7"/><rect x="63.90" y="246.95" width="1.2" height="0.7"/><rect x="565.90" y="246.95" width="1.2" height="0.7"/><rect x="315.10" y="404.45" width="0.8" height="1.7"/><rect x="63.90" y="250.13" width="1.2" height="0.7"/><rect x="565.90" y="250.13" width="1.2" height="0.7"/><rect x="320.13" y="404.45" width="0.8" height="1.7"/><rect x="63.90" y="253.30" width="1.2" height="0.7"/><rect x="565.90" y="253.30" width="1.2" height="0.7"/><rect x="325.16" y="404.45" width="0.8" height="1.7"/><rect x="63.90" y="256.48" width="1.2" height="0.7"/><rect x="565.90" y="256.48" width="1.2" height="0.7"/><rect x="330.20" y="404.45" width="0.8" height="1.7"/><rect x="63.90" y="259.66" width="1.2" height="0.7"/><rect x="565.90" y="259.66" width="1.2" height="0.7"/><rect x="335.23" y="404.45" width="0.8" height="1.7"/><rect x="63.90" y="262.83" width="1.2" height="0.7"/><rect x="565.90" y="262.83" width="1.2" height="0.7"/><rect x="340.26" y="404.45" width="0.8" height="1.7"/><rect x="63.90" y="266.01" width="1.2" height="0.7"/><rect x="565.90" y="266.01" width="1.2" height="0.7"/><rect x="345.29" y="404.45" width="0.8" height="1.7"/><rect x="63.90" y="269.19" width="1.2" height="0.7"/><rect x="565.90" y="269.19" width="1.2" height="0.7"/><rect x="350.32" y="404.45" width="0.8" height="1.7"/><rect x="63.90" y="272.37" width="1.2" height="0.7"/><rect x="565.90" y="272.37" width="1.2" height="0.7"/><rect x="355.36" y="404.45" width="0.8" height="1.7"/><rect x="63.90" y="275.54" width="1.2" height="0.7"/><rect x="565.90" y="275.54" width="1.2" height="0.7"/><rect x="360.39" y="404.45" width="0.8" height="1.7"/><rect x="63.90" y="278.72" width="1.2" height="0.7"/><rect x="565.90" y="278.72" width="1.2" height="0.7"/><rect x="365.42" y="404.45" width="0.8" height="1.7"/><rect x="63.90" y="281.90" width="1.2" height="0.7"/><rect x="565.90" y="281.90" width="1.2" height="0.7"/><rect x="370.45" y="404.45" width="0.8" height="1.7"/><rect x="63.90" y="285.07" width="1.2" height="0.7"/><rect x="565.90" y="285.07" width="1.2" height="0.7"/><rect x="375.48" y="404.45" width="0.8" height="1.7"/><rect x="63.90" y="288.25" width="1.2" height="0.7"/><rect x="565.90" y="288.25" width="1.2" height="0.7"/><rect x="380.52" y="404.45" width="0.8" height="1.7"/><rect x="63.90" y="291.43" width="1.2" height="0.7"/><rect x="565.90" y="291.43" width="1.2" height="0.7"/><rect x="385.55" y="404.45" width="0.8" height="1.7"/><rect x="63.90" y="294.60" width="1.2" height="0.7"/><rect x="565.90" y="294.60" width="1.2" height="0.7"/><rect x="390.58" y="404.45" width="0.8" height="1.7"/><rect x="63.90" y="297.78" width="1.2" height="0.7"/><rect x="565.90" y="297.78" width="1.2" height="0.7"/><rect x="395.61" y="404.45" width="0.8" height="1.7"/><rect x="63.90" y="300.96" width="1.2" height="0.7"/><rect x="565.90" y="300.96" width="1.2" height="0.7"/><rect x="400.64" y="404.45" width="0.8" height="1.7"/><rect x="63.90" y="304.14" width="1.2" height="0.7"/><rect x="565.90" y="304.14" width="1.2" height="0.7"/><rect x="405.68" y="404.45" width="0.8" height="1.7"/><rect x="63.90" y="307.31" width="1.2" height="0.7"/><rect x="565.90" y="307.31" width="1.2" height="0.7"/><rect x="410.71" y="404.45" width="0.8" height="1.7"/><rect x="63.90" y="310.49" width="1.2" height="0.7"/><rect x="565.90" y="310.49" width="1.2" height="0.7"/><rect x="415.74" y="404.45" width="0.8" height="1.7"/><rect x="63.90" y="313.67" width="1.2" height="0.7"/><rect x="565.90" y="313.67" width="1.2" height="0.7"/><rect x="420.77" y="404.45" width="0.8" height="1.7"/><rect x="63.90" y="316.84" width="1.2" height="0.7"/><rect x="565.90" y="316.84" width="1.2" height="0.7"/><rect x="425.80" y="404.45" width="0.8" height="1.7"/><rect x="63.90" y="320.02" width="1.2" height="0.7"/><rect x="565.90" y="320.02" width="1.2" height="0.7"/><rect x="430.84" y="404.45" width="0.8" height="1.7"/><rect x="63.90" y="323.20" width="1.2" height="0.7"/><rect x="565.90" y="323.20" width="1.2" height="0.7"/><rect x="435.87" y="404.45" width="0.8" height="1.7"/><rect x="63.90" y="326.38" width="1.2" height="0.7"/><rect x="565.90" y="326.38" width="1.2" height="0.7"/><rect x="440.90" y="404.45" width="0.8" height="1.7"/><rect x="63.90" y="329.55" width="1.2" height="0.7"/><rect x="565.90" y="329.55" width="1.2" height="0.7"/><rect x="445.93" y="404.45" width="0.8" height="1.7"/><rect x="63.90" y="332.73" width="1.2" height="0.7"/><rect x="565.90" y="332.73" width="1.2" height="0.7"/><rect x="450.96" y="404.45" width="0.8" height="1.7"/><rect x="63.90" y="335.91" width="1.2" height="0.7"/><rect x="565.90" y="335.91" width="1.2" height="0.7"/><rect x="456.00" y="404.45" width="0.8" height="1.7"/><rect x="63.90" y="339.08" width="1.2" height="0.7"/><rect x="565.90" y="339.08" width="1.2" height="0.7"/><rect x="461.03" y="404.45" width="0.8" height="1.7"/><rect x="63.90" y="342.26" width="1.2" height="0.7"/><rect x="565.90" y="342.26" width="1.2" height="0.7"/><rect x="466.06" y="404.45" width="0.8" height="1.7"/><rect x="63.90" y="345.44" width="1.2" height="0.7"/><rect x="565.90" y="345.44" width="1.2" height="0.7"/><rect x="471.09" y="404.45" width="0.8" height="1.7"/><rect x="63.90" y="348.61" width="1.2" height="0.7"/><rect x="565.90" y="348.61" width="1.2" height="0.7"/><rect x="476.12" y="404.45" width="0.8" height="1.7"/><rect x="63.90" y="351.79" width="1.2" height="0.7"/><rect x="565.90" y="351.79" width="1.2" height="0.7"/><rect x="481.16" y="404.45" width="0.8" height="1.7"/><rect x="63.90" y="354.97" width="1.2" height="0.7"/><rect x="565.90" y="354.97" width="1.2" height="0.7"/><rect x="486.19" y="404.45" width="0.8" height="1.7"/><rect x="63.90" y="358.14" width="1.2" height="0.7"/><rect x="565.90" y="358.14" width="1.2" height="0.7"/><rect x="491.22" y="404.45" width="0.8" height="1.7"/><rect x="63.90" y="361.32" width="1.2" height="0.7"/><rect x="565.90" y="361.32" width="1.2" height="0.7"/><rect x="496.25" y="404.45" width="0.8" height="1.7"/><rect x="63.90" y="364.50" width="1.2" height="0.7"/><rect x="565.90" y="364.50" width="1.2" height="0.7"/><rect x="501.28" y="404.45" width="0.8" height="1.7"/><rect x="63.90" y="367.68" width="1.2" height="0.7"/><rect x="565.90" y="367.68" width="1.2" height="0.7"/><rect x="506.32" y="404.45" width="0.8" height="1.7"/><rect x="63.90" y="370.85" width="1.2" height="0.7"/><rect x="565.90" y="370.85" width="1.2" height="0.7"/><rect x="511.35" y="404.45" width="0.8" height="1.7"/><rect x="63.90" y="374.03" width="1.2" height="0.7"/><rect x="565.90" y="374.03" width="1.2" height="0.7"/><rect x="516.38" y="404.45" width="0.8" height="1.7"/><rect x="63.90" y="377.21" width="1.2" height="0.7"/><rect x="565.90" y="377.21" width="1.2" height="0.7"/><rect x="521.41" y="404.45" width="0.8" height="1.7"/><rect x="63.90" y="380.38" width="1.2" height="0.7"/><rect x="565.90" y="380.38" width="1.2" height="0.7"/><rect x="526.44" y="404.45" width="0.8" height="1.7"/><rect x="63.90" y="383.56" width="1.2" height="0.7"/><rect x="565.90" y="383.56" width="1.2" height="0.7"/><rect x="531.48" y="404.45" width="0.8" height="1.7"/><rect x="63.90" y="386.74" width="1.2" height="0.7"/><rect x="565.90" y="386.74" width="1.2" height="0.7"/><rect x="536.51" y="404.45" width="0.8" height="1.7"/><rect x="63.90" y="389.91" width="1.2" height="0.7"/><rect x="565.90" y="389.91" width="1.2" height="0.7"/><rect x="541.54" y="404.45" width="0.8" height="1.7"/><rect x="63.90" y="393.09" width="1.2" height="0.7"/><rect x="565.90" y="393.09" width="1.2" height="0.7"/><rect x="546.57" y="404.45" width="0.8" height="1.7"/><rect x="63.90" y="396.27" width="1.2" height="0.7"/><rect x="565.90" y="396.27" width="1.2" height="0.7"/><rect x="551.60" y="404.45" width="0.8" height="1.7"/><rect x="63.90" y="399.45" width="1.2" height="0.7"/><rect x="565.90" y="399.45" width="1.2" height="0.7"/><rect x="556.64" y="404.45" width="0.8" height="1.7"/><rect x="63.90" y="402.62" width="1.2" height="0.7"/><rect x="565.90" y="402.62" width="1.2" height="0.7"/><rect x="561.67" y="404.45" width="0.8" height="1.7"/><rect x="63.90" y="405.80" width="1.2" height="0.7"/><rect x="565.90" y="405.80" width="1.2" height="0.7"/><rect x="566.70" y="404.45" width="0.8" height="1.7"/></svg>
<svg style="position:absolute;left:0;top:0" width="632" height="460"><rect x="64.50" y="246.15" width="502.00" height="1.4" fill="#0C9C0C"/><rect x="64.50" y="325.95" width="502.00" height="1.2" fill="#A01400"/></svg>
<div style="left:47.40px;top:89.07px;font-family:'Liberation Mono', monospace;font-size:6.8px;line-height:6.8px;white-space:nowrap;color:#18C8C8;transform:scale(0.9190,1.0000);transform-origin:0 0;will-change:transform;-webkit-text-stroke:0.2px currentColor;">2.00</div>
<div style="left:568.60px;top:89.07px;font-family:'Liberation Mono', monospace;font-size:6.8px;line-height:6.8px;white-space:nowrap;color:#18C8C8;transform:scale(0.9018,1.0000);transform-origin:0 0;will-change:transform;-webkit-text-stroke:0.2px currentColor;">1.60</div>
<div style="left:47.40px;top:117.69px;font-family:'Liberation Mono', monospace;font-size:6.8px;line-height:6.8px;white-space:nowrap;color:#18C8C8;transform:scale(0.9190,1.0000);transform-origin:0 0;will-change:transform;-webkit-text-stroke:0.2px currentColor;">1.80</div>
<div style="left:568.60px;top:117.69px;font-family:'Liberation Mono', monospace;font-size:6.8px;line-height:6.8px;white-space:nowrap;color:#18C8C8;transform:scale(0.9018,1.0000);transform-origin:0 0;will-change:transform;-webkit-text-stroke:0.2px currentColor;">1.40</div>
<div style="left:47.40px;top:149.46px;font-family:'Liberation Mono', monospace;font-size:6.8px;line-height:6.8px;white-space:nowrap;color:#18C8C8;transform:scale(0.9190,1.0000);transform-origin:0 0;will-change:transform;-webkit-text-stroke:0.2px currentColor;">1.60</div>
<div style="left:568.60px;top:149.46px;font-family:'Liberation Mono', monospace;font-size:6.8px;line-height:6.8px;white-space:nowrap;color:#18C8C8;transform:scale(0.9018,1.0000);transform-origin:0 0;will-change:transform;-webkit-text-stroke:0.2px currentColor;">1.20</div>
<div style="left:47.40px;top:181.23px;font-family:'Liberation Mono', monospace;font-size:6.8px;line-height:6.8px;white-space:nowrap;color:#18C8C8;transform:scale(0.9190,1.0000);transform-origin:0 0;will-change:transform;-webkit-text-stroke:0.2px currentColor;">1.40</div>
<div style="left:568.60px;top:181.23px;font-family:'Liberation Mono', monospace;font-size:6.8px;line-height:6.8px;white-space:nowrap;color:#18C8C8;transform:scale(0.9018,1.0000);transform-origin:0 0;will-change:transform;-webkit-text-stroke:0.2px currentColor;">1.00</div>
<div style="left:47.40px;top:213.00px;font-family:'Liberation Mono', monospace;font-size:6.8px;line-height:6.8px;white-space:nowrap;color:#18C8C8;transform:scale(0.9190,1.0000);transform-origin:0 0;will-change:transform;-webkit-text-stroke:0.2px currentColor;">1.20</div>
<div style="left:568.60px;top:213.00px;font-family:'Liberation Mono', monospace;font-size:6.8px;line-height:6.8px;white-space:nowrap;color:#18C8C8;transform:scale(0.9018,1.0000);transform-origin:0 0;will-change:transform;-webkit-text-stroke:0.2px currentColor;">800m</div>
<div style="left:47.40px;top:244.77px;font-family:'Liberation Mono', monospace;font-size:6.8px;line-height:6.8px;white-space:nowrap;color:#18C8C8;transform:scale(0.9190,1.0000);transform-origin:0 0;will-change:transform;-webkit-text-stroke:0.2px currentColor;">1.00</div>
<div style="left:568.60px;top:244.77px;font-family:'Liberation Mono', monospace;font-size:6.8px;line-height:6.8px;white-space:nowrap;color:#18C8C8;transform:scale(0.9018,1.0000);transform-origin:0 0;will-change:transform;-webkit-text-stroke:0.2px currentColor;">600m</div>
<div style="left:47.40px;top:276.54px;font-family:'Liberation Mono', monospace;font-size:6.8px;line-height:6.8px;white-space:nowrap;color:#18C8C8;transform:scale(0.9190,1.0000);transform-origin:0 0;will-change:transform;-webkit-text-stroke:0.2px currentColor;">800m</div>
<div style="left:568.60px;top:276.54px;font-family:'Liberation Mono', monospace;font-size:6.8px;line-height:6.8px;white-space:nowrap;color:#18C8C8;transform:scale(0.9018,1.0000);transform-origin:0 0;will-change:transform;-webkit-text-stroke:0.2px currentColor;">400m</div>
<div style="left:47.40px;top:308.31px;font-family:'Liberation Mono', monospace;font-size:6.8px;line-height:6.8px;white-space:nowrap;color:#18C8C8;transform:scale(0.9190,1.0000);transform-origin:0 0;will-change:transform;-webkit-text-stroke:0.2px currentColor;">600m</div>
<div style="left:568.60px;top:308.31px;font-family:'Liberation Mono', monospace;font-size:6.8px;line-height:6.8px;white-space:nowrap;color:#18C8C8;transform:scale(0.9018,1.0000);transform-origin:0 0;will-change:transform;-webkit-text-stroke:0.2px currentColor;">200m</div>
<div style="left:47.40px;top:340.08px;font-family:'Liberation Mono', monospace;font-size:6.8px;line-height:6.8px;white-space:nowrap;color:#18C8C8;transform:scale(0.9190,1.0000);transform-origin:0 0;will-change:transform;-webkit-text-stroke:0.2px currentColor;">400m</div>
<div style="left:568.60px;top:340.08px;font-family:'Liberation Mono', monospace;font-size:6.8px;line-height:6.8px;white-space:nowrap;color:#18C8C8;transform:scale(0.9018,1.0000);transform-origin:0 0;will-change:transform;-webkit-text-stroke:0.2px currentColor;">0.00</div>
<div style="left:47.40px;top:371.85px;font-family:'Liberation Mono', monospace;font-size:6.8px;line-height:6.8px;white-space:nowrap;color:#18C8C8;transform:scale(0.9190,1.0000);transform-origin:0 0;will-change:transform;-webkit-text-stroke:0.2px currentColor;">200m</div>
<div style="left:568.60px;top:371.85px;font-family:'Liberation Mono', monospace;font-size:6.8px;line-height:6.8px;white-space:nowrap;color:#18C8C8;transform:scale(0.9018,1.0000);transform-origin:0 0;will-change:transform;-webkit-text-stroke:0.2px currentColor;">-200m</div>
<div style="left:47.40px;top:400.17px;font-family:'Liberation Mono', monospace;font-size:6.8px;line-height:6.8px;white-space:nowrap;color:#18C8C8;transform:scale(0.9190,1.0000);transform-origin:0 0;will-change:transform;-webkit-text-stroke:0.2px currentColor;">0.00</div>
<div style="left:568.60px;top:400.17px;font-family:'Liberation Mono', monospace;font-size:6.8px;line-height:6.8px;white-space:nowrap;color:#18C8C8;transform:scale(0.9018,1.0000);transform-origin:0 0;will-change:transform;-webkit-text-stroke:0.2px currentColor;">-400m</div>
<div style="left:63.20px;top:406.57px;font-family:'Liberation Mono', monospace;font-size:6.8px;line-height:6.8px;white-space:nowrap;color:#18C8C8;transform:scale(0.9190,1.0000);transform-origin:0 0;will-change:transform;-webkit-text-stroke:0.2px currentColor;">0.00</div>
<div style="left:106.72px;top:406.57px;font-family:'Liberation Mono', monospace;font-size:6.8px;line-height:6.8px;white-space:nowrap;color:#18C8C8;transform:scale(0.9190,1.0000);transform-origin:0 0;will-change:transform;-webkit-text-stroke:0.2px currentColor;">100m</div>
<div style="left:157.04px;top:406.57px;font-family:'Liberation Mono', monospace;font-size:6.8px;line-height:6.8px;white-space:nowrap;color:#18C8C8;transform:scale(0.9190,1.0000);transform-origin:0 0;will-change:transform;-webkit-text-stroke:0.2px currentColor;">200m</div>
<div style="left:207.36px;top:406.57px;font-family:'Liberation Mono', monospace;font-size:6.8px;line-height:6.8px;white-space:nowrap;color:#18C8C8;transform:scale(0.9190,1.0000);transform-origin:0 0;will-change:transform;-webkit-text-stroke:0.2px currentColor;">300m</div>
<div style="left:257.68px;top:406.57px;font-family:'Liberation Mono', monospace;font-size:6.8px;line-height:6.8px;white-space:nowrap;color:#18C8C8;transform:scale(0.9190,1.0000);transform-origin:0 0;will-change:transform;-webkit-text-stroke:0.2px currentColor;">400m</div>
<div style="left:308.00px;top:406.57px;font-family:'Liberation Mono', monospace;font-size:6.8px;line-height:6.8px;white-space:nowrap;color:#18C8C8;transform:scale(0.9190,1.0000);transform-origin:0 0;will-change:transform;-webkit-text-stroke:0.2px currentColor;">500m</div>
<div style="left:358.32px;top:406.57px;font-family:'Liberation Mono', monospace;font-size:6.8px;line-height:6.8px;white-space:nowrap;color:#18C8C8;transform:scale(0.9190,1.0000);transform-origin:0 0;will-change:transform;-webkit-text-stroke:0.2px currentColor;">600m</div>
<div style="left:408.64px;top:406.57px;font-family:'Liberation Mono', monospace;font-size:6.8px;line-height:6.8px;white-space:nowrap;color:#18C8C8;transform:scale(0.9190,1.0000);transform-origin:0 0;will-change:transform;-webkit-text-stroke:0.2px currentColor;">700m</div>
<div style="left:458.96px;top:406.57px;font-family:'Liberation Mono', monospace;font-size:6.8px;line-height:6.8px;white-space:nowrap;color:#18C8C8;transform:scale(0.9190,1.0000);transform-origin:0 0;will-change:transform;-webkit-text-stroke:0.2px currentColor;">800m</div>
<div style="left:509.28px;top:406.57px;font-family:'Liberation Mono', monospace;font-size:6.8px;line-height:6.8px;white-space:nowrap;color:#18C8C8;transform:scale(0.9190,1.0000);transform-origin:0 0;will-change:transform;-webkit-text-stroke:0.2px currentColor;">900m</div>
<div style="left:551.00px;top:406.57px;font-family:'Liberation Mono', monospace;font-size:6.8px;line-height:6.8px;white-space:nowrap;color:#18C8C8;transform:scale(0.9190,1.0000);transform-origin:0 0;will-change:transform;-webkit-text-stroke:0.2px currentColor;">1.00</div>
<div style="left:66.90px;top:89.07px;font-family:'Liberation Mono', monospace;font-size:6.8px;line-height:6.8px;white-space:nowrap;color:#14C014;transform:scale(0.9263,1.0000);transform-origin:0 0;will-change:transform;-webkit-text-stroke:0.2px currentColor;">V1(+)</div>
<div style="left:542.70px;top:395.27px;font-family:'Liberation Mono', monospace;font-size:6.8px;line-height:6.8px;white-space:nowrap;color:#B81010;transform:scale(0.9704,1.0000);transform-origin:0 0;will-change:transform;-webkit-text-stroke:0.2px currentColor;">R1(1)</div>
<div style="left:37.60px;top:413.60px;width:555.80px;height:0.80px;background:#F4F2E6"></div>
<svg style="position:absolute;left:44.40px;top:419.80px;overflow:visible" width="8" height="8" viewBox="0 0 8 8"><path d="M0.6 0.6V7.4H7.6" stroke="#222" stroke-width="0.9" fill="none"/><path d="M1.2 6.6L3.6 3.2L5 4.6L7.6 1" stroke="#E050E0" stroke-width="1" fill="none"/><path d="M1.6 7L6 2.8" stroke="#4060E0" stroke-width="0.9"/></svg>
<svg style="position:absolute;left:55.50px;top:419.80px;overflow:visible" width="8" height="8" viewBox="0 0 8 8"><path d="M4 0V4.4M1.8 2.2H6.2" stroke="#10A010" stroke-width="1.4"/><path d="M0.4 6.6Q1.5 5 2.6 6.6T4.8 6.6T7.6 6.6" stroke="#333" stroke-width="0.8" fill="none"/></svg>
<svg style="position:absolute;left:66.60px;top:419.80px;overflow:visible" width="9" height="8" viewBox="0 0 9 8"><path d="M0 2H3M0 4H2.4M0.6 6H3" stroke="#555" stroke-width="0.6"/><path d="M6 0.8L4 4L6 4.6L3.6 7.8" stroke="#E02020" stroke-width="1.4" fill="none"/><circle cx="7" cy="1.2" r="1" fill="#E02020"/><path d="M4 3.2H7.8" stroke="#E02020" stroke-width="0.9"/></svg>
<div style="left:79.20px;top:418.00px;width:0.90px;height:11.00px;background:#C5C2B2"></div>
<div style="left:80.10px;top:418.00px;width:0.60px;height:11.00px;background:#fff"></div>
<svg style="position:absolute;left:82.00px;top:420.40px;overflow:visible" width="8" height="6" viewBox="0 0 8 6"><path d="M0 3L3.4 0V1.9H8V4.1H3.4V6Z" fill="#1530E0"/></svg>
<svg style="position:absolute;left:93.40px;top:420.40px;overflow:visible" width="8" height="6" viewBox="0 0 8 6"><path d="M8 3L4.6 0V1.9H0V4.1H4.6V6Z" fill="#1530E0"/></svg>
<svg style="position:absolute;left:104.40px;top:419.60px;overflow:visible" width="8.6" height="8.4" viewBox="0 0 8.6 8.4"><circle cx="3.4" cy="3.4" r="2.7" fill="#fff" stroke="#111" stroke-width="1"/><path d="M5.3 5.3L7.8 7.6" stroke="#111" stroke-width="1.5"/><path d="M2 3.4H4.8M3.4 2V4.8" stroke="#111" stroke-width="0.8"/></svg>
<svg style="position:absolute;left:115.60px;top:419.60px;overflow:visible" width="8.6" height="8.4" viewBox="0 0 8.6 8.4"><circle cx="3.4" cy="3.4" r="2.7" fill="#fff" stroke="#111" stroke-width="1"/><path d="M5.3 5.3L7.8 7.6" stroke="#111" stroke-width="1.5"/><path d="M2 3.4H4.8" stroke="#111" stroke-width="0.9"/></svg>
<svg style="position:absolute;left:127.00px;top:419.60px;overflow:visible" width="8.6" height="8.4" viewBox="0 0 8.6 8.4"><circle cx="3.4" cy="3.4" r="2.7" fill="#ddd" stroke="#111" stroke-width="1"/><path d="M5.3 5.3L7.8 7.6" stroke="#111" stroke-width="1.5"/><path d="M2 3.4H4.8M3.4 2V4.8" stroke="#111" stroke-width="0.8"/></svg>
<svg style="position:absolute;left:138.80px;top:419.80px;overflow:visible" width="8.6" height="8" viewBox="0 0 8.6 8"><rect x="0.6" y="0.6" width="7.4" height="6.8" fill="#fff" stroke="#181818" stroke-width="1.3" stroke-dasharray="2 0.8"/><circle cx="4.3" cy="3.8" r="2.2" fill="#fff" stroke="#555" stroke-width="0.5"/><path d="M5.8 5.6L8.2 7.8" stroke="#111" stroke-width="1.3"/></svg>
<div style="left:150.80px;top:418.00px;width:0.90px;height:11.00px;background:#C5C2B2"></div>
<div style="left:151.70px;top:418.00px;width:0.60px;height:11.00px;background:#fff"></div>
<svg style="position:absolute;left:155.40px;top:420.00px;overflow:visible" width="8.6" height="7.6" viewBox="0 0 8.6 7.6"><path d="M1 1.2L7.6 6.6" stroke="#5A2020" stroke-width="2.4" stroke-linecap="round"/><path d="M2 1.8L3.2 2.8" stroke="#E0A0A0" stroke-width="0.7"/></svg>
<div style="left:168.60px;top:418.00px;width:0.90px;height:11.00px;background:#C5C2B2"></div>
<div style="left:169.50px;top:418.00px;width:0.60px;height:11.00px;background:#fff"></div>
<div style="left:172.40px;top:419.40px;width:419.00px;height:7.80px;background:#000;border-top:0.6px solid #777;box-sizing:border-box"></div>
<div style="left:304.30px;top:419.63px;font-family:'Liberation Mono', monospace;font-size:6.8px;line-height:6.8px;white-space:nowrap;color:#C82AC8;font-weight:bold;transform:scale(0.9918,1.2000);transform-origin:0 0;will-change:transform;">PROTEUS VSM - VIRTUAL SYSTEM MODELLING</div>
<div style="left:5.20px;top:444.20px;width:0.90px;height:9.20px;background:#fff"></div>
<div style="left:6.30px;top:444.20px;width:1.00px;height:9.20px;background:#C0BDAE"></div>
<div style="left:9.20px;top:444.00px;width:21.60px;height:9.60px;background:#ECE9D8;border:1px solid #3C3C3C;box-sizing:border-box;box-shadow:inset 1px 1px 0 #FFFFFF"></div>
<svg style="position:absolute;left:17.80px;top:446.20px;overflow:visible" width="5" height="6" viewBox="0 0 5 6"><path d="M0 0L4 2.9L0 5.8Z" fill="#000"/></svg>
<div style="left:30.30px;top:444.00px;width:21.60px;height:9.60px;background:#ECE9D8;border:1px solid #3C3C3C;box-sizing:border-box;box-shadow:inset 1px 1px 0 #FFFFFF"></div>
<svg style="position:absolute;left:38.10px;top:446.20px;overflow:visible" width="6" height="6" viewBox="0 0 6 6"><rect x="0" y="0" width="1.2" height="5.8" fill="#000"/><path d="M2 0L5.8 2.9L2 5.8Z" fill="#000"/></svg>
<div style="left:51.40px;top:444.00px;width:21.60px;height:9.60px;background:#ECE9D8;border:1px solid #3C3C3C;box-sizing:border-box;box-shadow:inset 1px 1px 0 #FFFFFF"></div>
<svg style="position:absolute;left:59.80px;top:446.20px;overflow:visible" width="5" height="6" viewBox="0 0 5 6"><rect x="0.3" y="0" width="1.4" height="5.8" fill="#000"/><rect x="3.1" y="0" width="1.4" height="5.8" fill="#000"/></svg>
<div style="left:72.50px;top:444.00px;width:21.60px;height:9.60px;background:#ECE9D8;border:1px solid #3C3C3C;box-sizing:border-box;box-shadow:inset 1px 1px 0 #FFFFFF"></div>
<div style="left:80.50px;top:446.40px;width:5.60px;height:5.40px;background:#000"></div>
<div style="left:96.80px;top:443.40px;width:53.40px;height:9.80px;border-left:0.7px solid #C8C6B8;border-top:0.7px solid #C8C6B8;box-sizing:border-box"></div>
<svg style="position:absolute;left:98.70px;top:445.40px;overflow:visible" width="7.8" height="7.8" viewBox="0 0 7.8 7.8"><circle cx="3.9" cy="3.9" r="3.6" fill="#666"/><rect x="3.3" y="3.2" width="1.2" height="3.2" fill="#fff"/><rect x="3.3" y="1.5" width="1.2" height="1.1" fill="#fff"/></svg>
<div style="left:111.40px;top:445.79px;font-family:'Liberation Sans', sans-serif;font-size:7.0px;line-height:7.0px;white-space:nowrap;color:#9C9A8E;transform:scale(0.8131,1.0000);transform-origin:0 0;will-change:transform;">No Messages</div>
<div style="left:153.00px;top:443.60px;width:0.90px;height:9.60px;background:#C5C2B2"></div>
<div style="left:153.90px;top:443.60px;width:0.60px;height:9.60px;background:#fff"></div>
<div style="left:157.80px;top:443.40px;width:393.40px;height:9.80px;border-left:0.7px solid #A8A698;border-top:0.7px solid #A8A698;border-right:0.7px solid #fff;box-sizing:border-box"></div>
<div style="left:160.20px;top:445.69px;font-family:'Liberation Sans', sans-serif;font-size:7.0px;line-height:7.0px;white-space:nowrap;color:#000;transform:scale(0.8144,1.0000);transform-origin:0 0;will-change:transform;-webkit-text-stroke:0.12px currentColor;">Simulation Graph - ANALOGUE ANALYSIS</div>
<div style="left:555.00px;top:443.60px;width:0.90px;height:9.60px;background:#C5C2B2"></div>
<div style="left:555.90px;top:443.60px;width:0.60px;height:9.60px;background:#fff"></div>
<div style="left:558.60px;top:443.40px;width:69.40px;height:9.80px;border-left:0.7px solid #A8A698;border-top:0.7px solid #A8A698;box-sizing:border-box"></div>
<div style="left:565.80px;top:445.69px;font-family:'Liberation Sans', sans-serif;font-size:7.0px;line-height:7.0px;white-space:nowrap;color:#000;transform:scale(0.8146,1.0000);transform-origin:0 0;will-change:transform;-webkit-text-stroke:0.12px currentColor;">+600.0</div>
<div style="left:589.40px;top:445.69px;font-family:'Liberation Sans', sans-serif;font-size:7.0px;line-height:7.0px;white-space:nowrap;color:#000;transform:scale(0.8157,1.0000);transform-origin:0 0;will-change:transform;-webkit-text-stroke:0.12px currentColor;">+2500.0</div>
<div style="left:618.80px;top:445.46px;font-family:'Liberation Sans', sans-serif;font-size:7.2px;line-height:7.2px;white-space:nowrap;color:#4444B8;font-weight:bold;transform:scale(0.8535,1.0000);transform-origin:0 0;will-change:transform;">th</div>
</body></html>
